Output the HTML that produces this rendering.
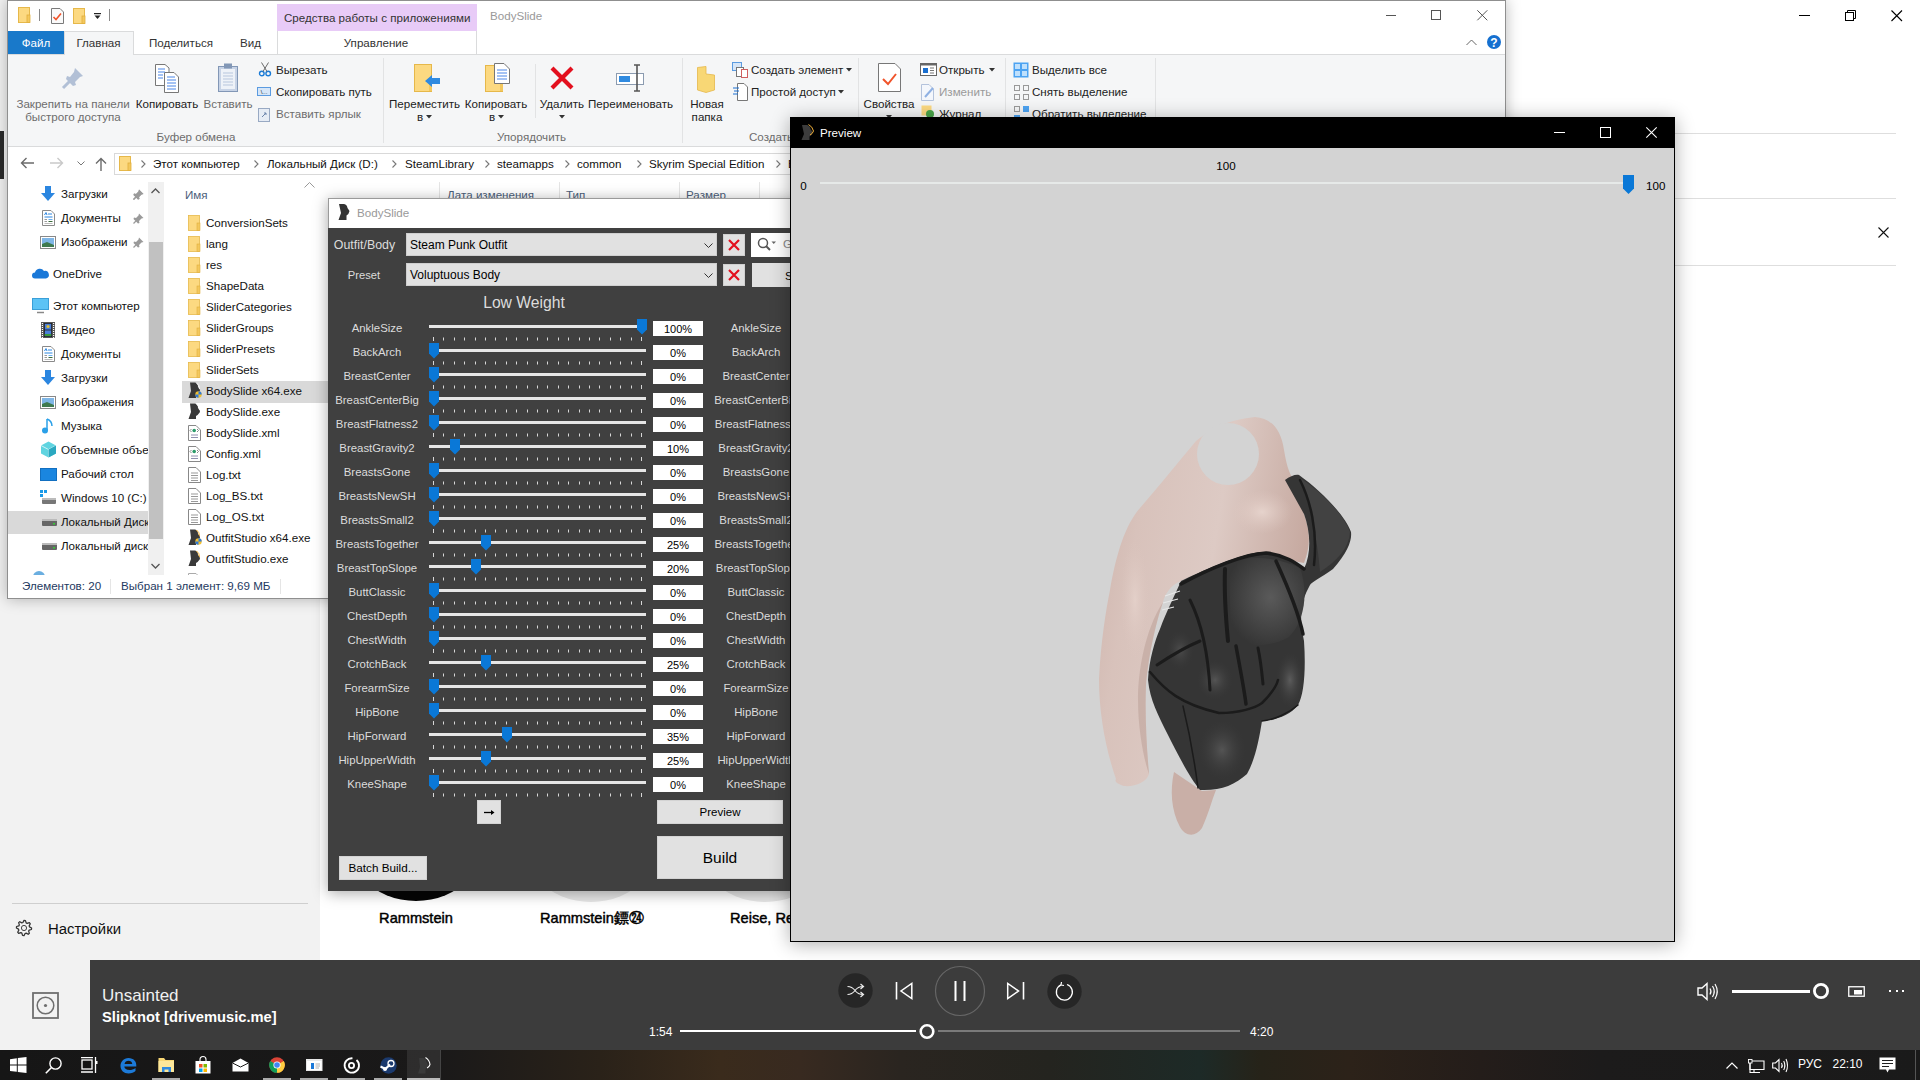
<!DOCTYPE html>
<html><head><meta charset="utf-8">
<style>
*{margin:0;padding:0;box-sizing:border-box}
html,body{width:1920px;height:1080px;overflow:hidden;background:#fff;font-family:"Liberation Sans",sans-serif;font-size:12px;color:#000;position:relative}
.a{position:absolute}
.t{position:absolute;white-space:nowrap;line-height:1}
svg{overflow:visible}
</style></head><body>
<div class="a" style="left:0px;top:0px;width:320px;height:960px;background:#f2f2f2;"></div>
<div class="a" style="left:0px;top:131px;width:4px;height:48px;background:#2b2b2b;"></div>
<div class="a" style="left:12px;top:903px;width:296px;height:1px;background:#cfcfcf;"></div>
<svg class="a" style="left:16px;top:920px;" width="16" height="16" viewBox="0 0 16 16"><path d="M8.00 0.40 L9.48 0.55 L10.14 2.83 L11.11 3.34 L13.37 2.63 L14.32 3.78 L13.17 5.86 L13.49 6.91 L15.60 8.00 L15.45 9.48 L13.17 10.14 L12.66 11.11 L13.37 13.37 L12.22 14.32 L10.14 13.17 L9.09 13.49 L8.00 15.60 L6.52 15.45 L5.86 13.17 L4.89 12.66 L2.63 13.37 L1.68 12.22 L2.83 10.14 L2.51 9.09 L0.40 8.00 L0.55 6.52 L2.83 5.86 L3.34 4.89 L2.63 2.63 L3.78 1.68 L5.86 2.83 L6.91 2.51Z" fill="none" stroke="#333" stroke-width="1.25" stroke-linejoin="round"/><circle cx="8" cy="8" r="2.6" fill="none" stroke="#444" stroke-width="1"/></svg>
<div class="t" style="left:48px;top:921.7px;font-size:14.9px;color:#111;font-weight:400;">Настройки</div>
<svg class="a" style="left:1799px;top:15px;" width="12" height="2" viewBox="0 0 12 2"><rect x="0" y="0" width="11" height="1" fill="#000"/></svg>
<svg class="a" style="left:1845px;top:10px;" width="12" height="12" viewBox="0 0 12 12"><rect x="0.5" y="2.5" width="8" height="8" fill="none" stroke="#000"/><path d="M2.5 2.5V0.5H10.5V8.5H8.5" fill="none" stroke="#000"/></svg>
<svg class="a" style="left:1891px;top:10px;" width="12" height="12" viewBox="0 0 12 12"><path d="M0.5 0.5L11 11M11 0.5L0.5 11" stroke="#000" stroke-width="1.1"/></svg>
<div class="a" style="left:1675px;top:133px;width:221px;height:1px;background:#dedede;"></div>
<div class="a" style="left:1675px;top:198px;width:221px;height:1px;background:#dedede;"></div>
<div class="a" style="left:1675px;top:265px;width:221px;height:1px;background:#dedede;"></div>
<svg class="a" style="left:1878px;top:227px;" width="11" height="11" viewBox="0 0 11 11"><path d="M0.5 0.5L10.5 10.5M10.5 0.5L0.5 10.5" stroke="#111" stroke-width="1.1"/></svg>
<div class="a" style="left:339px;top:747px;width:154px;height:154px;border-radius:50%;background:#050505"></div>
<div class="a" style="left:514px;top:748px;width:154px;height:154px;border-radius:50%;background:#e6e6e6"></div>
<div class="a" style="left:688px;top:748px;width:154px;height:154px;border-radius:50%;background:#e6e6e6"></div>
<div class="t" style="left:336.0px;width:160px;text-align:center;top:910.8px;font-size:14.6px;color:#000;font-weight:400;-webkit-text-stroke:0.45px #000">Rammstein</div>
<div class="t" style="left:540px;top:910.8px;font-size:14.6px;color:#000;font-weight:400;-webkit-text-stroke:0.45px #000">Rammstein鏢㉔</div>
<div class="t" style="left:730px;top:910.8px;font-size:14.6px;color:#000;font-weight:400;-webkit-text-stroke:0.45px #000">Reise, Re</div>
<div class="a" style="left:7px;top:0;width:1499px;height:599px;background:#fff;border:1px solid #8f8f8f;box-shadow:0 0 14px rgba(0,0,0,.28)"></div>
<svg class="a" style="left:18px;top:7px;" width="13" height="16" viewBox="0 0 13 16"><rect x="0.5" y="0.5" width="11" height="15" fill="#fcd981" stroke="#e6b84a"/><rect x="9" y="8" width="3" height="7.5" fill="#f3c85e" stroke="#e0ae3c" stroke-width="0.8"/></svg>
<div class="a" style="left:39px;top:9px;width:1px;height:12px;background:#8a8a8a;"></div>
<svg class="a" style="left:51px;top:8px;" width="13" height="16" viewBox="0 0 13 16"><path d="M0.5 0.5H9L12.5 4V15.5H0.5Z" fill="#fafafa" stroke="#7a7a7a"/><path d="M2.5 9L5 11.5L10 5.5" fill="none" stroke="#f0542b" stroke-width="1.6"/></svg>
<svg class="a" style="left:73px;top:8px;" width="13" height="16" viewBox="0 0 13 16"><rect x="0.5" y="0.5" width="11" height="15" fill="#fcd981" stroke="#e6b84a"/><rect x="9" y="8" width="3" height="7.5" fill="#f3c85e" stroke="#e0ae3c" stroke-width="0.8"/></svg>
<svg class="a" style="left:94px;top:13px;" width="8" height="7" viewBox="0 0 8 7"><rect x="0" y="0" width="7" height="1.2" fill="#222"/><path d="M0.5 2.5H6.5L3.5 6Z" fill="#222"/></svg>
<div class="a" style="left:109px;top:9px;width:1px;height:12px;background:#8a8a8a;"></div>
<div class="a" style="left:277px;top:4px;width:200px;height:27px;background:#e8cbf7;"></div>
<div class="t" style="left:284px;top:11.5px;font-size:11.6px;color:#333;font-weight:400;">Средства работы с приложениями</div>
<div class="t" style="left:490px;top:9.5px;font-size:11.6px;color:#999;font-weight:400;">BodySlide</div>
<div class="a" style="left:1386px;top:15px;width:10px;height:1px;background:#555;"></div>
<div class="a" style="left:1431px;top:10px;width:10px;height:10px;border:1px solid #555"></div>
<svg class="a" style="left:1477px;top:10px;" width="11" height="11" viewBox="0 0 11 11"><path d="M0.3 0.3L10.3 10.3M10.3 0.3L0.3 10.3" stroke="#555" stroke-width="1"/></svg>
<div class="a" style="left:8px;top:54px;width:1497px;height:1px;background:#dadbdc;"></div>
<div class="a" style="left:8px;top:31px;width:56px;height:23px;background:#1979ca;"></div>
<div class="t" style="left:8.0px;width:56px;text-align:center;top:36.5px;font-size:11.6px;color:#fff;font-weight:400;">Файл</div>
<div class="a" style="left:64px;top:31px;width:70px;height:24px;background:#f5f6f7;border:1px solid #dadbdc;border-bottom:none"></div>
<div class="t" style="left:63.5px;width:70px;text-align:center;top:36.5px;font-size:11.6px;color:#333;font-weight:400;">Главная</div>
<div class="t" style="left:149px;top:36.5px;font-size:11.6px;color:#333;font-weight:400;">Поделиться</div>
<div class="t" style="left:240px;top:36.5px;font-size:11.6px;color:#333;font-weight:400;">Вид</div>
<div class="a" style="left:277px;top:31px;width:1px;height:23px;background:#dadbdc;"></div>
<div class="a" style="left:476px;top:31px;width:1px;height:23px;background:#dadbdc;"></div>
<div class="t" style="left:277.0px;width:198px;text-align:center;top:36.5px;font-size:11.6px;color:#333;font-weight:400;">Управление</div>
<svg class="a" style="left:1466px;top:39px;" width="11" height="7" viewBox="0 0 11 7"><path d="M0.5 6L5.5 1L10.5 6" fill="none" stroke="#666" stroke-width="1"/></svg>
<svg class="a" style="left:1487px;top:35px;" width="14" height="14" viewBox="0 0 14 14"><circle cx="7" cy="7" r="7" fill="#1570d0"/><text x="7" y="11.5" font-size="12" font-weight="700" fill="#fff" text-anchor="middle" font-family="Liberation Sans">?</text></svg>
<div class="a" style="left:8px;top:55px;width:1497px;height:91px;background:#f5f6f7;"></div>
<div class="a" style="left:8px;top:146px;width:1497px;height:1px;background:#dadbdc;"></div>
<div class="a" style="left:383px;top:58px;width:1px;height:85px;background:#e2e3e4;"></div>
<div class="a" style="left:682px;top:58px;width:1px;height:85px;background:#e2e3e4;"></div>
<div class="a" style="left:858px;top:58px;width:1px;height:85px;background:#e2e3e4;"></div>
<div class="a" style="left:1005px;top:58px;width:1px;height:85px;background:#e2e3e4;"></div>
<div class="a" style="left:1155px;top:58px;width:1px;height:85px;background:#e2e3e4;"></div>
<div class="a" style="left:535px;top:64px;width:1px;height:54px;background:#e2e3e4;"></div>
<svg class="a" style="left:62px;top:67px;" width="22" height="22" viewBox="0 0 22 22"><path d="M13 1L21 9L18 10L13 15L14 18L11 19L4 12L5 9L8 10L12 5Z" fill="#b2c0d6"/><path d="M8 14L1 21" stroke="#b2c0d6" stroke-width="3"/></svg>
<div class="t" style="left:8.0px;width:130px;text-align:center;top:98.0px;font-size:11.6px;color:#6d6d6d;font-weight:400;">Закрепить на панели</div>
<div class="t" style="left:8.0px;width:130px;text-align:center;top:111.0px;font-size:11.6px;color:#6d6d6d;font-weight:400;">быстрого доступа</div>
<svg class="a" style="left:155px;top:64px;" width="25" height="29" viewBox="0 0 25 29"><path d="M0.5 0.5H10L14 4V21.5H0.5Z" fill="#fff" stroke="#777"/><path d="M9.5 8.5H19L23.5 13V28.5H9.5Z" fill="#fff" stroke="#777"/><g stroke="#4a86e8" stroke-width="1"><path d="M3 5H10M3 8H10M3 11H8M3 14H8M12 13H20M12 16H21M12 19H21M12 22H21M12 25H21"/></g></svg>
<div class="t" style="left:127.0px;width:80px;text-align:center;top:98.0px;font-size:11.6px;color:#222;font-weight:400;">Копировать</div>
<svg class="a" style="left:218px;top:63px;" width="21" height="30" viewBox="0 0 21 30"><rect x="0.5" y="3.5" width="19" height="25" fill="#c7d3e6" stroke="#8297b6"/><rect x="3" y="6" width="14" height="20" fill="#eef2f8"/><rect x="6" y="0.5" width="8" height="5" fill="#8297b6"/><g stroke="#b7c6dd"><path d="M5 10H15M5 13H15M5 16H15M5 19H15M5 22H15"/></g></svg>
<div class="t" style="left:198.0px;width:60px;text-align:center;top:98.0px;font-size:11.6px;color:#6d6d6d;font-weight:400;">Вставить</div>
<svg class="a" style="left:259px;top:62px;" width="12" height="15" viewBox="0 0 12 15"><circle cx="2.8" cy="11.5" r="2.3" fill="none" stroke="#1a7bd7" stroke-width="1.4"/><circle cx="9.2" cy="11.5" r="2.3" fill="none" stroke="#1a7bd7" stroke-width="1.4"/><path d="M4 9.5L9.5 0.5M8 9.5L2.5 0.5" stroke="#6a6a6a" stroke-width="1"/></svg>
<div class="t" style="left:276px;top:64.0px;font-size:11.6px;color:#222;font-weight:400;">Вырезать</div>
<svg class="a" style="left:257px;top:87px;" width="14" height="10" viewBox="0 0 14 10"><rect x="0.5" y="0.5" width="13" height="8" fill="#d6e6f8" stroke="#5b9be0"/><text x="7" y="7.3" font-size="6" fill="#123" text-anchor="middle" font-family="Liberation Sans">\...</text></svg>
<div class="t" style="left:276px;top:86.0px;font-size:11.6px;color:#222;font-weight:400;">Скопировать путь</div>
<svg class="a" style="left:258px;top:107px;" width="12" height="15" viewBox="0 0 12 15"><rect x="0.5" y="1.5" width="11" height="13" fill="#e6ecf5" stroke="#98a9c3"/><path d="M4 10L8 6M6 6H8V8" stroke="#6b84ab" fill="none"/></svg>
<div class="t" style="left:276px;top:108.0px;font-size:11.6px;color:#6d6d6d;font-weight:400;">Вставить ярлык</div>
<div class="t" style="left:146.0px;width:100px;text-align:center;top:131.0px;font-size:11.6px;color:#6d6d6d;font-weight:400;">Буфер обмена</div>
<svg class="a" style="left:414px;top:64px;" width="27" height="29" viewBox="0 0 27 29"><rect x="0.5" y="0.5" width="17" height="27" fill="#fcd981" stroke="#e6b84a"/><rect x="15" y="16" width="3" height="11" fill="#f3c85e"/><path d="M11 17L18 11V14H26V20H18V23Z" fill="#2f8ae0"/></svg>
<div class="t" style="left:384.5px;width:80px;text-align:center;top:98.0px;font-size:11.6px;color:#222;font-weight:400;">Переместить</div>
<div class="t" style="left:417px;top:111.0px;font-size:11.6px;color:#222;font-weight:400;">в</div>
<svg class="a" style="left:426px;top:115px;" width="6" height="4" viewBox="0 0 6 4"><path d="M0 0H6L3 3.5Z" fill="#333"/></svg>
<svg class="a" style="left:485px;top:63px;" width="26" height="30" viewBox="0 0 26 30"><rect x="0.5" y="2.5" width="17" height="26" fill="#fcd981" stroke="#e6b84a"/><rect x="15" y="17" width="3" height="11" fill="#f3c85e"/><path d="M9.5 0.5H19L24.5 6V20.5H9.5Z" fill="#fff" stroke="#777"/><g stroke="#4a86e8"><path d="M12 7H22M12 10H22M12 13H22M12 16H22"/></g></svg>
<div class="t" style="left:456.0px;width:80px;text-align:center;top:98.0px;font-size:11.6px;color:#222;font-weight:400;">Копировать</div>
<div class="t" style="left:489px;top:111.0px;font-size:11.6px;color:#222;font-weight:400;">в</div>
<svg class="a" style="left:498px;top:115px;" width="6" height="4" viewBox="0 0 6 4"><path d="M0 0H6L3 3.5Z" fill="#333"/></svg>
<svg class="a" style="left:549px;top:65px;" width="26" height="26" viewBox="0 0 26 26"><path d="M3 3L23 23M23 3L3 23" stroke="#e3101e" stroke-width="4.2"/></svg>
<div class="t" style="left:532.0px;width:60px;text-align:center;top:98.0px;font-size:11.6px;color:#222;font-weight:400;">Удалить</div>
<svg class="a" style="left:559px;top:115px;" width="6" height="4" viewBox="0 0 6 4"><path d="M0 0H6L3 3.5Z" fill="#333"/></svg>
<svg class="a" style="left:616px;top:64px;" width="30" height="28" viewBox="0 0 30 28"><rect x="0.5" y="9.5" width="27" height="11" fill="#fff" stroke="#8b9bb0"/><rect x="3" y="12" width="11" height="6" fill="#2f8ae0"/><path d="M18 1H24M21 1V27M18 27H24" stroke="#555" stroke-width="1.6"/></svg>
<div class="t" style="left:580.5px;width:100px;text-align:center;top:98.0px;font-size:11.6px;color:#222;font-weight:400;">Переименовать</div>
<svg class="a" style="left:697px;top:66px;" width="19" height="27" viewBox="0 0 19 27"><path d="M0.5 1.5L9 0.5V8L17.5 9V24L9 26.5L0.5 24Z" fill="#f8d775" stroke="#e6b84a" stroke-width="0.8"/></svg>
<div class="t" style="left:677.0px;width:60px;text-align:center;top:98.0px;font-size:11.6px;color:#222;font-weight:400;">Новая</div>
<div class="t" style="left:677.0px;width:60px;text-align:center;top:111.0px;font-size:11.6px;color:#222;font-weight:400;">папка</div>
<svg class="a" style="left:732px;top:62px;" width="17" height="16" viewBox="0 0 17 16"><rect x="0.5" y="0.5" width="9" height="8" fill="#d6e6f8" stroke="#5b9be0"/><rect x="4.5" y="5.5" width="7" height="9" fill="#fff" stroke="#777"/><rect x="9.5" y="7.5" width="6" height="8" fill="#fff" stroke="#d06060"/></svg>
<div class="t" style="left:751px;top:64.0px;font-size:11.6px;color:#222;font-weight:400;">Создать элемент</div>
<svg class="a" style="left:846px;top:68px;" width="6" height="4" viewBox="0 0 6 4"><path d="M0 0H6L3 3.5Z" fill="#333"/></svg>
<svg class="a" style="left:733px;top:83px;" width="15" height="18" viewBox="0 0 15 18"><path d="M4.5 0.5H11L14.5 4V17.5H4.5Z" fill="#fff" stroke="#777"/><path d="M0 5H6M1 8H6M0 11H5" stroke="#1a6fd0"/></svg>
<div class="t" style="left:751px;top:86.0px;font-size:11.6px;color:#222;font-weight:400;">Простой доступ</div>
<svg class="a" style="left:838px;top:90px;" width="6" height="4" viewBox="0 0 6 4"><path d="M0 0H6L3 3.5Z" fill="#333"/></svg>
<div class="t" style="left:481.5px;width:100px;text-align:center;top:131.0px;font-size:11.6px;color:#6d6d6d;font-weight:400;">Упорядочить</div>
<div class="t" style="left:749px;top:131.0px;font-size:11.6px;color:#6d6d6d;font-weight:400;">Создать</div>
<svg class="a" style="left:878px;top:63px;" width="23" height="30" viewBox="0 0 23 30"><path d="M0.5 0.5H17L22.5 6V28.5H0.5Z" fill="#fff" stroke="#777"/><path d="M5 16L10 21L18 11" fill="none" stroke="#f0542b" stroke-width="2"/></svg>
<div class="t" style="left:859.0px;width:60px;text-align:center;top:98.0px;font-size:11.6px;color:#222;font-weight:400;">Свойства</div>
<svg class="a" style="left:886px;top:115px;" width="6" height="4" viewBox="0 0 6 4"><path d="M0 0H6L3 3.5Z" fill="#333"/></svg>
<svg class="a" style="left:920px;top:63px;" width="17" height="13" viewBox="0 0 17 13"><rect x="0.5" y="0.5" width="16" height="12" fill="#fff" stroke="#666"/><rect x="0.5" y="0.5" width="16" height="2" fill="#666"/><rect x="3" y="5" width="5" height="5" fill="#1a6fd0"/><path d="M10 5H14M10 7.5H14M10 10H14" stroke="#777"/></svg>
<div class="t" style="left:939px;top:64.0px;font-size:11.6px;color:#222;font-weight:400;">Открыть</div>
<svg class="a" style="left:989px;top:68px;" width="6" height="4" viewBox="0 0 6 4"><path d="M0 0H6L3 3.5Z" fill="#333"/></svg>
<svg class="a" style="left:921px;top:84px;" width="15" height="17" viewBox="0 0 15 17"><path d="M0.5 0.5H8L12.5 5V16.5H0.5Z" fill="#f4f7fc" stroke="#b4c3dc"/><path d="M4 13L12 4" stroke="#8fb1e3" stroke-width="2"/></svg>
<div class="t" style="left:939px;top:86.0px;font-size:11.6px;color:#9a9a9a;font-weight:400;">Изменить</div>
<svg class="a" style="left:921px;top:105px;" width="15" height="12" viewBox="0 0 15 12"><rect x="0.5" y="0.5" width="10" height="10" fill="#fcd981"/><circle cx="9" cy="9" r="4" fill="#4aa54a"/></svg>
<div class="t" style="left:939px;top:108.0px;font-size:11.6px;color:#222;font-weight:400;">Журнал</div>
<svg class="a" style="left:1013px;top:62px;" width="16" height="16" viewBox="0 0 16 16"><rect x="0.5" y="0.5" width="15" height="15" fill="#4da3f2"/><rect x="2" y="2" width="5" height="5" fill="#bfe0fc"/><rect x="9" y="2" width="5" height="5" fill="#bfe0fc"/><rect x="2" y="9" width="5" height="5" fill="#bfe0fc"/><rect x="9" y="9" width="5" height="5" fill="#bfe0fc"/></svg>
<div class="t" style="left:1032px;top:64.0px;font-size:11.6px;color:#222;font-weight:400;">Выделить все</div>
<svg class="a" style="left:1014px;top:85px;" width="15" height="15" viewBox="0 0 15 15"><g fill="none" stroke="#999"><rect x="0.5" y="0.5" width="5" height="5"/><rect x="9.5" y="0.5" width="5" height="5"/><rect x="0.5" y="9.5" width="5" height="5"/><rect x="9.5" y="9.5" width="5" height="5"/></g></svg>
<div class="t" style="left:1032px;top:86.0px;font-size:11.6px;color:#222;font-weight:400;">Снять выделение</div>
<svg class="a" style="left:1014px;top:106px;" width="15" height="12" viewBox="0 0 15 12"><g fill="none" stroke="#999"><rect x="0.5" y="0.5" width="5" height="5"/></g><rect x="9" y="0" width="6" height="6" fill="#4da3f2"/><rect x="0" y="9" width="6" height="6" fill="#4da3f2"/></svg>
<div class="t" style="left:1032px;top:108.0px;font-size:11.6px;color:#222;font-weight:400;">Обратить выделение</div>
<svg class="a" style="left:20px;top:157px;" width="15" height="12" viewBox="0 0 15 12"><path d="M14 6H1.5M6.5 1L1.5 6L6.5 11" fill="none" stroke="#6b6b6b" stroke-width="1.4"/></svg>
<svg class="a" style="left:49px;top:157px;" width="15" height="12" viewBox="0 0 15 12"><path d="M1 6H13.5M8.5 1L13.5 6L8.5 11" fill="none" stroke="#c9c9c9" stroke-width="1.4"/></svg>
<svg class="a" style="left:77px;top:161px;" width="8" height="5" viewBox="0 0 8 5"><path d="M0.5 0.5L4 4L7.5 0.5" fill="none" stroke="#777" stroke-width="1"/></svg>
<svg class="a" style="left:95px;top:157px;" width="12" height="14" viewBox="0 0 12 14"><path d="M6 14V1.5M1 6.5L6 1.5L11 6.5" fill="none" stroke="#6b6b6b" stroke-width="1.4"/></svg>
<div class="a" style="left:114px;top:153px;width:700px;height:22px;background:#fff;border:1px solid #d9d9d9"></div>
<svg class="a" style="left:119px;top:156px;" width="13" height="15" viewBox="0 0 13 15"><rect x="0.5" y="0.5" width="11" height="14" fill="#fcd981" stroke="#e6b84a"/><rect x="9" y="7" width="3" height="7.5" fill="#f3c85e" stroke="#e0ae3c" stroke-width="0.8"/></svg>
<svg class="a" style="left:141px;top:160px;" width="5" height="8" viewBox="0 0 5 8"><path d="M0.5 0.5L4 4L0.5 7.5" fill="none" stroke="#777" stroke-width="1.1"/></svg>
<div class="t" style="left:153px;top:158.0px;font-size:11.6px;color:#111;font-weight:400;">Этот компьютер</div>
<svg class="a" style="left:254px;top:160px;" width="5" height="8" viewBox="0 0 5 8"><path d="M0.5 0.5L4 4L0.5 7.5" fill="none" stroke="#777" stroke-width="1.1"/></svg>
<div class="t" style="left:267px;top:158.0px;font-size:11.6px;color:#111;font-weight:400;">Локальный Диск (D:)</div>
<svg class="a" style="left:392px;top:160px;" width="5" height="8" viewBox="0 0 5 8"><path d="M0.5 0.5L4 4L0.5 7.5" fill="none" stroke="#777" stroke-width="1.1"/></svg>
<div class="t" style="left:405px;top:158.0px;font-size:11.6px;color:#111;font-weight:400;">SteamLibrary</div>
<svg class="a" style="left:485px;top:160px;" width="5" height="8" viewBox="0 0 5 8"><path d="M0.5 0.5L4 4L0.5 7.5" fill="none" stroke="#777" stroke-width="1.1"/></svg>
<div class="t" style="left:497px;top:158.0px;font-size:11.6px;color:#111;font-weight:400;">steamapps</div>
<svg class="a" style="left:565px;top:160px;" width="5" height="8" viewBox="0 0 5 8"><path d="M0.5 0.5L4 4L0.5 7.5" fill="none" stroke="#777" stroke-width="1.1"/></svg>
<div class="t" style="left:577px;top:158.0px;font-size:11.6px;color:#111;font-weight:400;">common</div>
<svg class="a" style="left:637px;top:160px;" width="5" height="8" viewBox="0 0 5 8"><path d="M0.5 0.5L4 4L0.5 7.5" fill="none" stroke="#777" stroke-width="1.1"/></svg>
<div class="t" style="left:649px;top:158.0px;font-size:11.6px;color:#111;font-weight:400;">Skyrim Special Edition</div>
<svg class="a" style="left:776px;top:160px;" width="5" height="8" viewBox="0 0 5 8"><path d="M0.5 0.5L4 4L0.5 7.5" fill="none" stroke="#777" stroke-width="1.1"/></svg>
<div class="t" style="left:788px;top:158.0px;font-size:11.6px;color:#111;font-weight:400;">B</div>
<div class="t" style="left:185px;top:188.5px;font-size:11.6px;color:#4c607a;font-weight:400;">Имя</div>
<svg class="a" style="left:304px;top:182px;" width="11" height="6" viewBox="0 0 11 6"><path d="M0.5 5.5L5.5 0.5L10.5 5.5" fill="none" stroke="#999" stroke-width="1"/></svg>
<div class="a" style="left:439px;top:182px;width:1px;height:24px;background:#e5e5e5;"></div>
<div class="a" style="left:559px;top:182px;width:1px;height:24px;background:#e5e5e5;"></div>
<div class="a" style="left:679px;top:182px;width:1px;height:24px;background:#e5e5e5;"></div>
<div class="a" style="left:759px;top:182px;width:1px;height:24px;background:#e5e5e5;"></div>
<div class="t" style="left:447px;top:188.5px;font-size:11.6px;color:#4c607a;font-weight:400;">Дата изменения</div>
<div class="t" style="left:566px;top:188.5px;font-size:11.6px;color:#4c607a;font-weight:400;">Тип</div>
<div class="t" style="left:686px;top:188.5px;font-size:11.6px;color:#4c607a;font-weight:400;">Размер</div>
<div class="a" style="left:163px;top:205px;width:630px;height:1px;background:#ffffff;"></div>
<div class="a" style="left:148px;top:182px;width:16px;height:393px;background:#f0f0f0;"></div>
<div class="a" style="left:149px;top:242px;width:14px;height:297px;background:#c1c1c1;"></div>
<svg class="a" style="left:151px;top:188px;" width="9" height="6" viewBox="0 0 9 6"><path d="M0.5 5L4.5 1L8.5 5" fill="none" stroke="#555" stroke-width="1.3"/></svg>
<svg class="a" style="left:151px;top:563px;" width="9" height="6" viewBox="0 0 9 6"><path d="M0.5 1L4.5 5L8.5 1" fill="none" stroke="#555" stroke-width="1.3"/></svg>
<div class="a" style="left:8px;top:511px;width:140px;height:23px;background:#d9d9d9;"></div>
<div class="a" style="left:8px;top:182px;width:140px;height:393px;overflow:hidden">
<svg class="a" style="left:32px;top:4px;" width="16" height="16" viewBox="0 0 16 16"><path d="M5 0H11V7H15L8 15L1 7H5Z" fill="#2b86e0"/></svg>
<div class="t" style="left:53px;top:6.0px;font-size:11.6px;color:#111;font-weight:400;">Загрузки</div>
<svg class="a" style="left:34px;top:28px;" width="14" height="16" viewBox="0 0 14 16"><path d="M0.5 0.5H9L12.5 4V15.5H0.5Z" fill="#fff" stroke="#8a8a8a"/><path d="M2.5 5L4 2.5L5 5" fill="none" stroke="#2a86e0" stroke-width="1"/><path d="M6 4H10M2.5 7H10.5" stroke="#2a86e0" stroke-width="1"/><path d="M2.5 9.5H5M2.5 11.5H5" stroke="#999"/><path d="M6.5 9.5H10.5" stroke="#6aaef0"/><path d="M6.5 11.5H10.5" stroke="#3a6a3a"/><path d="M2.5 13.5H10.5" stroke="#bbb"/></svg>
<div class="t" style="left:53px;top:30.0px;font-size:11.6px;color:#111;font-weight:400;">Документы</div>
<svg class="a" style="left:32px;top:54px;" width="16" height="13" viewBox="0 0 16 13"><rect x="0.5" y="0.5" width="15" height="12" fill="#fff" stroke="#888"/><rect x="2" y="2" width="12" height="9" fill="#7fb6e6"/><path d="M2 8L7 6L14 9V11H2Z" fill="#3f7a4f"/></svg>
<div class="t" style="left:53px;top:54.0px;font-size:11.6px;color:#111;font-weight:400;">Изображени</div>
<svg class="a" style="left:24px;top:86px;" width="17" height="11" viewBox="0 0 17 11"><path d="M3 10.5A3 3 0 0 1 3 4.5A5 5 0 0 1 12 3A3.8 3.8 0 0 1 14 10.5Z" fill="#1a78d8"/></svg>
<div class="t" style="left:45px;top:86.0px;font-size:11.6px;color:#111;font-weight:400;">OneDrive</div>
<svg class="a" style="left:24px;top:116px;" width="17" height="16" viewBox="0 0 17 16"><rect x="0.5" y="0.5" width="16" height="11" fill="#5cc3f5" stroke="#3a9fd8"/><path d="M5 14.5H12" stroke="#888" stroke-width="1.5"/></svg>
<div class="t" style="left:45px;top:118.0px;font-size:11.6px;color:#111;font-weight:400;">Этот компьютер</div>
<svg class="a" style="left:33px;top:140px;" width="14" height="16" viewBox="0 0 14 16"><rect x="0" y="0" width="14" height="16" fill="#555"/><rect x="3" y="1" width="8" height="14" fill="#1e1e1e"/><rect x="3.8" y="1.8" width="6.4" height="5.8" fill="#4a7fd8"/><rect x="3.8" y="8.4" width="6.4" height="5.8" fill="#4a7fd8"/><circle cx="7" cy="4.5" r="1.6" fill="#e0c030"/><rect x="3.8" y="12" width="6.4" height="2" fill="#3a9a3a"/><rect x="0.8" y="1" width="1.2" height="1" fill="#fff"/><rect x="12" y="1" width="1.2" height="1" fill="#fff"/><rect x="0.8" y="3" width="1.2" height="1" fill="#fff"/><rect x="12" y="3" width="1.2" height="1" fill="#fff"/><rect x="0.8" y="5" width="1.2" height="1" fill="#fff"/><rect x="12" y="5" width="1.2" height="1" fill="#fff"/><rect x="0.8" y="7" width="1.2" height="1" fill="#fff"/><rect x="12" y="7" width="1.2" height="1" fill="#fff"/><rect x="0.8" y="9" width="1.2" height="1" fill="#fff"/><rect x="12" y="9" width="1.2" height="1" fill="#fff"/><rect x="0.8" y="11" width="1.2" height="1" fill="#fff"/><rect x="12" y="11" width="1.2" height="1" fill="#fff"/><rect x="0.8" y="13" width="1.2" height="1" fill="#fff"/><rect x="12" y="13" width="1.2" height="1" fill="#fff"/><rect x="0.8" y="15" width="1.2" height="1" fill="#fff"/><rect x="12" y="15" width="1.2" height="1" fill="#fff"/></svg>
<div class="t" style="left:53px;top:142.0px;font-size:11.6px;color:#111;font-weight:400;">Видео</div>
<svg class="a" style="left:34px;top:164px;" width="14" height="16" viewBox="0 0 14 16"><path d="M0.5 0.5H9L12.5 4V15.5H0.5Z" fill="#fff" stroke="#8a8a8a"/><path d="M2.5 5L4 2.5L5 5" fill="none" stroke="#2a86e0" stroke-width="1"/><path d="M6 4H10M2.5 7H10.5" stroke="#2a86e0" stroke-width="1"/><path d="M2.5 9.5H5M2.5 11.5H5" stroke="#999"/><path d="M6.5 9.5H10.5" stroke="#6aaef0"/><path d="M6.5 11.5H10.5" stroke="#3a6a3a"/><path d="M2.5 13.5H10.5" stroke="#bbb"/></svg>
<div class="t" style="left:53px;top:166.0px;font-size:11.6px;color:#111;font-weight:400;">Документы</div>
<svg class="a" style="left:32px;top:188px;" width="16" height="16" viewBox="0 0 16 16"><path d="M5 0H11V7H15L8 15L1 7H5Z" fill="#2b86e0"/></svg>
<div class="t" style="left:53px;top:190.0px;font-size:11.6px;color:#111;font-weight:400;">Загрузки</div>
<svg class="a" style="left:32px;top:214px;" width="16" height="13" viewBox="0 0 16 13"><rect x="0.5" y="0.5" width="15" height="12" fill="#fff" stroke="#888"/><rect x="2" y="2" width="12" height="9" fill="#7fb6e6"/><path d="M2 8L7 6L14 9V11H2Z" fill="#3f7a4f"/></svg>
<div class="t" style="left:53px;top:214.0px;font-size:11.6px;color:#111;font-weight:400;">Изображения</div>
<svg class="a" style="left:33px;top:236px;" width="14" height="16" viewBox="0 0 14 16"><path d="M6 1V12" stroke="#2aa0e8" stroke-width="1.5"/><circle cx="4" cy="12.5" r="3" fill="#2aa0e8"/><path d="M6 1Q11 3 11 8" fill="none" stroke="#2aa0e8" stroke-width="1.5"/></svg>
<div class="t" style="left:53px;top:238.0px;font-size:11.6px;color:#111;font-weight:400;">Музыка</div>
<svg class="a" style="left:32px;top:259px;" width="17" height="17" viewBox="0 0 17 17"><path d="M8.5 0.5L16 4.5V12.5L8.5 16.5L1 12.5V4.5Z" fill="#5fd4e0"/><path d="M8.5 8.5L16 4.5M8.5 8.5L1 4.5M8.5 8.5V16.5" stroke="#fff" stroke-width="0.7"/><path d="M8.5 8.5L16 4.5V12.5L8.5 16.5Z" fill="#2aa8c0"/></svg>
<div class="t" style="left:53px;top:262.0px;font-size:11.6px;color:#111;font-weight:400;">Объемные объекты</div>
<svg class="a" style="left:32px;top:286px;" width="17" height="13" viewBox="0 0 17 13"><rect x="0.5" y="0.5" width="16" height="12" fill="#1a86e0" stroke="#126fc0"/></svg>
<div class="t" style="left:53px;top:286.0px;font-size:11.6px;color:#111;font-weight:400;">Рабочий стол</div>
<svg class="a" style="left:32px;top:308px;" width="17" height="15" viewBox="0 0 17 15"><rect x="0" y="0" width="3" height="3" fill="#1a9ae8"/><rect x="4" y="0" width="3" height="3" fill="#1a9ae8"/><rect x="0" y="4" width="3" height="3" fill="#1a9ae8"/><rect x="2" y="9" width="14" height="5" rx="1" fill="#777"/><rect x="2" y="8" width="14" height="2" fill="#bbb"/></svg>
<div class="t" style="left:53px;top:310.0px;font-size:11.6px;color:#111;font-weight:400;">Windows 10 (C:)</div>
<svg class="a" style="left:33px;top:336px;" width="17" height="8" viewBox="0 0 17 8"><rect x="1" y="2" width="15" height="6" rx="1" fill="#666"/><rect x="1" y="1" width="15" height="2" fill="#bbb"/><rect x="12" y="5" width="2" height="1.5" fill="#3c3"/></svg>
<div class="t" style="left:53px;top:334.0px;font-size:11.6px;color:#111;font-weight:400;">Локальный Диск</div>
<svg class="a" style="left:33px;top:360px;" width="17" height="8" viewBox="0 0 17 8"><rect x="1" y="2" width="15" height="6" rx="1" fill="#666"/><rect x="1" y="1" width="15" height="2" fill="#bbb"/><rect x="12" y="5" width="2" height="1.5" fill="#3c3"/></svg>
<div class="t" style="left:53px;top:358.0px;font-size:11.6px;color:#111;font-weight:400;">Локальный диск</div>
<svg class="a" style="left:125px;top:7px;" width="11" height="11" viewBox="0 0 11 11"><path d="M6 0.5L10.5 5L8.5 5.5L6 8L6.5 10L5 10.5L0.5 6L1 4.5L3 5L5.5 2.5Z" fill="#9a9a9a"/><path d="M3 8L0.5 10.5" stroke="#9a9a9a" stroke-width="1.3"/></svg>
<svg class="a" style="left:125px;top:31px;" width="11" height="11" viewBox="0 0 11 11"><path d="M6 0.5L10.5 5L8.5 5.5L6 8L6.5 10L5 10.5L0.5 6L1 4.5L3 5L5.5 2.5Z" fill="#9a9a9a"/><path d="M3 8L0.5 10.5" stroke="#9a9a9a" stroke-width="1.3"/></svg>
<svg class="a" style="left:125px;top:55px;" width="11" height="11" viewBox="0 0 11 11"><path d="M6 0.5L10.5 5L8.5 5.5L6 8L6.5 10L5 10.5L0.5 6L1 4.5L3 5L5.5 2.5Z" fill="#9a9a9a"/><path d="M3 8L0.5 10.5" stroke="#9a9a9a" stroke-width="1.3"/></svg>
<svg class="a" style="left:24px;top:388px;" width="14" height="8" viewBox="0 0 14 8"><circle cx="7" cy="7" r="6" fill="#6aaee0"/></svg>
</div>
<svg class="a" style="left:133px;top:189px;" width="11" height="11" viewBox="0 0 11 11"><path d="M6 0.5L10.5 5L8.5 5.5L6 8L6.5 10L5 10.5L0.5 6L1 4.5L3 5L5.5 2.5Z" fill="#9a9a9a"/><path d="M3 8L0.5 10.5" stroke="#9a9a9a" stroke-width="1.3"/></svg>
<div class="a" style="left:182px;top:381px;width:146px;height:22px;background:#d9d9d9;"></div>
<div class="a" style="left:163px;top:206px;width:165px;height:369px;overflow:hidden">
<svg class="a" style="left:25px;top:9px;" width="13" height="16" viewBox="0 0 13 16"><rect x="0.5" y="0.5" width="11" height="15" fill="#fcd981" stroke="#e6b84a" stroke-width="0.8"/><rect x="9" y="8" width="3" height="7.5" fill="#f3c85e" stroke="#e0ae3c" stroke-width="0.6"/></svg>
<div class="t" style="left:43px;top:11.0px;font-size:11.6px;color:#111;font-weight:400;">ConversionSets</div>
<svg class="a" style="left:25px;top:30px;" width="13" height="16" viewBox="0 0 13 16"><rect x="0.5" y="0.5" width="11" height="15" fill="#fcd981" stroke="#e6b84a" stroke-width="0.8"/><rect x="9" y="8" width="3" height="7.5" fill="#f3c85e" stroke="#e0ae3c" stroke-width="0.6"/></svg>
<div class="t" style="left:43px;top:32.0px;font-size:11.6px;color:#111;font-weight:400;">lang</div>
<svg class="a" style="left:25px;top:51px;" width="13" height="16" viewBox="0 0 13 16"><rect x="0.5" y="0.5" width="11" height="15" fill="#fcd981" stroke="#e6b84a" stroke-width="0.8"/><rect x="9" y="8" width="3" height="7.5" fill="#f3c85e" stroke="#e0ae3c" stroke-width="0.6"/></svg>
<div class="t" style="left:43px;top:53.0px;font-size:11.6px;color:#111;font-weight:400;">res</div>
<svg class="a" style="left:25px;top:72px;" width="13" height="16" viewBox="0 0 13 16"><rect x="0.5" y="0.5" width="11" height="15" fill="#fcd981" stroke="#e6b84a" stroke-width="0.8"/><rect x="9" y="8" width="3" height="7.5" fill="#f3c85e" stroke="#e0ae3c" stroke-width="0.6"/></svg>
<div class="t" style="left:43px;top:74.0px;font-size:11.6px;color:#111;font-weight:400;">ShapeData</div>
<svg class="a" style="left:25px;top:93px;" width="13" height="16" viewBox="0 0 13 16"><rect x="0.5" y="0.5" width="11" height="15" fill="#fcd981" stroke="#e6b84a" stroke-width="0.8"/><rect x="9" y="8" width="3" height="7.5" fill="#f3c85e" stroke="#e0ae3c" stroke-width="0.6"/></svg>
<div class="t" style="left:43px;top:95.0px;font-size:11.6px;color:#111;font-weight:400;">SliderCategories</div>
<svg class="a" style="left:25px;top:114px;" width="13" height="16" viewBox="0 0 13 16"><rect x="0.5" y="0.5" width="11" height="15" fill="#fcd981" stroke="#e6b84a" stroke-width="0.8"/><rect x="9" y="8" width="3" height="7.5" fill="#f3c85e" stroke="#e0ae3c" stroke-width="0.6"/></svg>
<div class="t" style="left:43px;top:116.0px;font-size:11.6px;color:#111;font-weight:400;">SliderGroups</div>
<svg class="a" style="left:25px;top:135px;" width="13" height="16" viewBox="0 0 13 16"><rect x="0.5" y="0.5" width="11" height="15" fill="#fcd981" stroke="#e6b84a" stroke-width="0.8"/><rect x="9" y="8" width="3" height="7.5" fill="#f3c85e" stroke="#e0ae3c" stroke-width="0.6"/></svg>
<div class="t" style="left:43px;top:137.0px;font-size:11.6px;color:#111;font-weight:400;">SliderPresets</div>
<svg class="a" style="left:25px;top:156px;" width="13" height="16" viewBox="0 0 13 16"><rect x="0.5" y="0.5" width="11" height="15" fill="#fcd981" stroke="#e6b84a" stroke-width="0.8"/><rect x="9" y="8" width="3" height="7.5" fill="#f3c85e" stroke="#e0ae3c" stroke-width="0.6"/></svg>
<div class="t" style="left:43px;top:158.0px;font-size:11.6px;color:#111;font-weight:400;">SliderSets</div>
<svg class="a" style="left:25px;top:176px;" width="14" height="17" viewBox="0 0 14 17"><path d="M2 0.5H7Q10 1 10 5Q12 6 12 9Q10 12 8 13L8 16H0.5L3 9Z" fill="#3a3a3a"/><path d="M8.5 1Q11.5 3 11.5 7" fill="none" stroke="#ffffff" stroke-width="1"/><circle cx="10.5" cy="12.5" r="3.2" fill="#f3c030"/><path d="M10.5 9.3A3.2 3.2 0 0 1 13.7 12.5H10.5ZM10.5 15.7A3.2 3.2 0 0 1 7.3 12.5H10.5Z" fill="#2f7ad8"/></svg>
<div class="t" style="left:43px;top:179.0px;font-size:11.6px;color:#111;font-weight:400;">BodySlide x64.exe</div>
<svg class="a" style="left:25px;top:197px;" width="14" height="17" viewBox="0 0 14 17"><path d="M2 0.5H7Q10 1 10 5Q12 6 12 9Q10 12 8 13L8 16H0.5L3 9Z" fill="#3a3a3a"/><path d="M8.5 1Q11.5 3 11.5 7" fill="none" stroke="#ffffff" stroke-width="1"/></svg>
<div class="t" style="left:43px;top:200.0px;font-size:11.6px;color:#111;font-weight:400;">BodySlide.exe</div>
<svg class="a" style="left:25px;top:219px;" width="13" height="16" viewBox="0 0 13 16"><path d="M0.5 0.5H8L12.5 5V15.5H0.5Z" fill="#fff" stroke="#888"/><path d="M3.5 4L2 5.5L3.5 7M9 4L10.5 5.5L9 7" fill="none" stroke="#666" stroke-width="0.8"/><circle cx="6.2" cy="5.5" r="1.8" fill="#2a9a6a"/><path d="M3 10H10M3 12.5H10" stroke="#9090b0"/></svg>
<div class="t" style="left:43px;top:221.0px;font-size:11.6px;color:#111;font-weight:400;">BodySlide.xml</div>
<svg class="a" style="left:25px;top:240px;" width="13" height="16" viewBox="0 0 13 16"><path d="M0.5 0.5H8L12.5 5V15.5H0.5Z" fill="#fff" stroke="#888"/><path d="M3.5 4L2 5.5L3.5 7M9 4L10.5 5.5L9 7" fill="none" stroke="#666" stroke-width="0.8"/><circle cx="6.2" cy="5.5" r="1.8" fill="#2a9a6a"/><path d="M3 10H10M3 12.5H10" stroke="#9090b0"/></svg>
<div class="t" style="left:43px;top:242.0px;font-size:11.6px;color:#111;font-weight:400;">Config.xml</div>
<svg class="a" style="left:25px;top:261px;" width="13" height="16" viewBox="0 0 13 16"><path d="M0.5 0.5H8L12.5 5V15.5H0.5Z" fill="#fff" stroke="#888"/><path d="M3 6H10M3 8.5H10M3 11H10M3 13.5H10" stroke="#999"/></svg>
<div class="t" style="left:43px;top:263.0px;font-size:11.6px;color:#111;font-weight:400;">Log.txt</div>
<svg class="a" style="left:25px;top:282px;" width="13" height="16" viewBox="0 0 13 16"><path d="M0.5 0.5H8L12.5 5V15.5H0.5Z" fill="#fff" stroke="#888"/><path d="M3 6H10M3 8.5H10M3 11H10M3 13.5H10" stroke="#999"/></svg>
<div class="t" style="left:43px;top:284.0px;font-size:11.6px;color:#111;font-weight:400;">Log_BS.txt</div>
<svg class="a" style="left:25px;top:303px;" width="13" height="16" viewBox="0 0 13 16"><path d="M0.5 0.5H8L12.5 5V15.5H0.5Z" fill="#fff" stroke="#888"/><path d="M3 6H10M3 8.5H10M3 11H10M3 13.5H10" stroke="#999"/></svg>
<div class="t" style="left:43px;top:305.0px;font-size:11.6px;color:#111;font-weight:400;">Log_OS.txt</div>
<svg class="a" style="left:25px;top:323px;" width="14" height="17" viewBox="0 0 14 17"><path d="M2 0.5H7Q10 1 10 5Q12 6 12 9Q10 12 8 13L8 16H0.5L3 9Z" fill="#3a3a3a"/><path d="M8.5 1Q11.5 3 11.5 7" fill="none" stroke="#f3b23a" stroke-width="1"/><circle cx="10.5" cy="12.5" r="3.2" fill="#f3c030"/><path d="M10.5 9.3A3.2 3.2 0 0 1 13.7 12.5H10.5ZM10.5 15.7A3.2 3.2 0 0 1 7.3 12.5H10.5Z" fill="#2f7ad8"/></svg>
<div class="t" style="left:43px;top:326.0px;font-size:11.6px;color:#111;font-weight:400;">OutfitStudio x64.exe</div>
<svg class="a" style="left:25px;top:344px;" width="14" height="17" viewBox="0 0 14 17"><path d="M2 0.5H7Q10 1 10 5Q12 6 12 9Q10 12 8 13L8 16H0.5L3 9Z" fill="#3a3a3a"/><path d="M8.5 1Q11.5 3 11.5 7" fill="none" stroke="#f3b23a" stroke-width="1"/></svg>
<div class="t" style="left:43px;top:347.0px;font-size:11.6px;color:#111;font-weight:400;">OutfitStudio.exe</div>
<svg class="a" style="left:25px;top:367px;" width="13" height="16" viewBox="0 0 13 16"><path d="M0.5 0.5H8L12.5 5V15.5H0.5Z" fill="#fff" stroke="#aaa"/></svg>
</div>
<div class="t" style="left:22px;top:580.0px;font-size:11.6px;color:#1e3a5f;font-weight:400;">Элементов: 20</div>
<div class="a" style="left:110px;top:579px;width:1px;height:15px;background:#e5e5e5;"></div>
<div class="t" style="left:121px;top:580.0px;font-size:11.6px;color:#1e3a5f;font-weight:400;">Выбран 1 элемент: 9,69 МБ</div>
<div class="a" style="left:280px;top:579px;width:1px;height:15px;background:#e5e5e5;"></div>
<div class="a" style="left:328px;top:198px;width:470px;height:693px;background:#404040;box-shadow:0 2px 14px rgba(0,0,0,.35)"></div>
<div class="a" style="left:328px;top:198px;width:470px;height:30px;background:#fff;border:1px solid #9a9a9a;border-bottom:none"></div>
<svg class="a" style="left:338px;top:203px;" width="12" height="18" viewBox="0 0 12 18"><path d="M1 1H6Q9 1.5 9.5 5L11.5 8Q11 11 8.5 12.5L8.5 17H0.5L3 10Z" fill="#333"/></svg>
<div class="t" style="left:357px;top:206.5px;font-size:11.6px;color:#999;font-weight:400;">BodySlide</div>
<div class="t" style="left:324.5px;width:80px;text-align:center;top:239.1px;font-size:12.4px;color:#dcdcdc;font-weight:400;">Outfit/Body</div>
<div class="t" style="left:324.0px;width:80px;text-align:center;top:269.7px;font-size:11.2px;color:#dcdcdc;font-weight:400;">Preset</div>
<div class="a" style="left:406px;top:233px;width:311px;height:23px;background:#e1e1e1;border:1px solid #cfcfcf"></div>
<div class="t" style="left:410px;top:239.3px;font-size:12px;color:#000;font-weight:400;">Steam Punk Outfit</div>
<svg class="a" style="left:704px;top:243px;" width="9" height="5" viewBox="0 0 9 5"><path d="M0.5 0.5L4.5 4.5L8.5 0.5" fill="none" stroke="#333" stroke-width="1"/></svg>
<div class="a" style="left:723px;top:234px;width:22px;height:22px;background:#e1e1e1;border:1px solid #d0d0d0"></div>
<svg class="a" style="left:728px;top:239px;" width="12" height="12" viewBox="0 0 12 12"><path d="M1 1L11 11M11 1L1 11" stroke="#e3101e" stroke-width="2.2"/></svg>
<div class="a" style="left:406px;top:263px;width:311px;height:23px;background:#e1e1e1;border:1px solid #cfcfcf"></div>
<div class="t" style="left:410px;top:269.3px;font-size:12px;color:#000;font-weight:400;">Voluptuous Body</div>
<svg class="a" style="left:704px;top:273px;" width="9" height="5" viewBox="0 0 9 5"><path d="M0.5 0.5L4.5 4.5L8.5 0.5" fill="none" stroke="#333" stroke-width="1"/></svg>
<div class="a" style="left:723px;top:264px;width:22px;height:22px;background:#e1e1e1;border:1px solid #d0d0d0"></div>
<svg class="a" style="left:728px;top:269px;" width="12" height="12" viewBox="0 0 12 12"><path d="M1 1L11 11M11 1L1 11" stroke="#e3101e" stroke-width="2.2"/></svg>
<div class="a" style="left:751px;top:233px;width:40px;height:24px;background:#fff;"></div>
<svg class="a" style="left:757px;top:237px;" width="20" height="14" viewBox="0 0 20 14"><circle cx="6" cy="6" r="4.5" fill="none" stroke="#555" stroke-width="1.5"/><path d="M9 9L13 13" stroke="#555" stroke-width="2"/><path d="M14.5 4.5H19L16.75 7Z" fill="#666"/></svg>
<div class="t" style="left:783px;top:238.0px;font-size:11.6px;color:#888;font-weight:400;">G</div>
<div class="a" style="left:752px;top:263px;width:39px;height:24px;background:#e1e1e1;"></div>
<div class="t" style="left:785px;top:269.5px;font-size:11.6px;color:#000;font-weight:400;">S</div>
<div class="t" style="left:444.0px;width:160px;text-align:center;top:295.2px;font-size:15.7px;color:#dcdcdc;font-weight:400;">Low Weight</div>
<div class="t" style="left:327.0px;width:100px;text-align:center;top:323.1px;font-size:11.4px;color:#dcdcdc;font-weight:400;">AnkleSize</div>
<div class="a" style="left:429px;top:325px;width:217px;height:3px;background:#e6e6e6;"></div>
<svg class="a" style="left:433px;top:337px;" width="210" height="4" viewBox="0 0 210 4"><rect x="0" y="0" width="1" height="4" fill="#d8d8d8"/><rect x="10" y="0.5" width="1" height="3" fill="#d8d8d8"/><rect x="21" y="0.5" width="1" height="3" fill="#d8d8d8"/><rect x="31" y="0.5" width="1" height="3" fill="#d8d8d8"/><rect x="42" y="0.5" width="1" height="3" fill="#d8d8d8"/><rect x="52" y="0.5" width="1" height="3" fill="#d8d8d8"/><rect x="62" y="0.5" width="1" height="3" fill="#d8d8d8"/><rect x="73" y="0.5" width="1" height="3" fill="#d8d8d8"/><rect x="83" y="0.5" width="1" height="3" fill="#d8d8d8"/><rect x="94" y="0.5" width="1" height="3" fill="#d8d8d8"/><rect x="104" y="0.5" width="1" height="3" fill="#d8d8d8"/><rect x="114" y="0.5" width="1" height="3" fill="#d8d8d8"/><rect x="125" y="0.5" width="1" height="3" fill="#d8d8d8"/><rect x="135" y="0.5" width="1" height="3" fill="#d8d8d8"/><rect x="146" y="0.5" width="1" height="3" fill="#d8d8d8"/><rect x="156" y="0.5" width="1" height="3" fill="#d8d8d8"/><rect x="166" y="0.5" width="1" height="3" fill="#d8d8d8"/><rect x="177" y="0.5" width="1" height="3" fill="#d8d8d8"/><rect x="187" y="0.5" width="1" height="3" fill="#d8d8d8"/><rect x="198" y="0.5" width="1" height="3" fill="#d8d8d8"/><rect x="208" y="0" width="1" height="4" fill="#d8d8d8"/></svg>
<svg class="a" style="left:637px;top:319px;" width="10" height="16" viewBox="0 0 10 16"><path d="M0 0H10V10.5L5 15.5L0 10.5Z" fill="#0a78d7"/></svg>
<div class="a" style="left:653px;top:321px;width:50px;height:15px;background:#fff;"></div>
<div class="t" style="left:653.0px;width:50px;text-align:center;top:323.6px;font-size:11px;color:#000;font-weight:400;">100%</div>
<div class="t" style="left:706.0px;width:100px;text-align:center;top:323.1px;font-size:11.4px;color:#dcdcdc;font-weight:400;">AnkleSize</div>
<div class="t" style="left:327.0px;width:100px;text-align:center;top:347.1px;font-size:11.4px;color:#dcdcdc;font-weight:400;">BackArch</div>
<div class="a" style="left:429px;top:349px;width:217px;height:3px;background:#e6e6e6;"></div>
<svg class="a" style="left:433px;top:361px;" width="210" height="4" viewBox="0 0 210 4"><rect x="0" y="0" width="1" height="4" fill="#d8d8d8"/><rect x="10" y="0.5" width="1" height="3" fill="#d8d8d8"/><rect x="21" y="0.5" width="1" height="3" fill="#d8d8d8"/><rect x="31" y="0.5" width="1" height="3" fill="#d8d8d8"/><rect x="42" y="0.5" width="1" height="3" fill="#d8d8d8"/><rect x="52" y="0.5" width="1" height="3" fill="#d8d8d8"/><rect x="62" y="0.5" width="1" height="3" fill="#d8d8d8"/><rect x="73" y="0.5" width="1" height="3" fill="#d8d8d8"/><rect x="83" y="0.5" width="1" height="3" fill="#d8d8d8"/><rect x="94" y="0.5" width="1" height="3" fill="#d8d8d8"/><rect x="104" y="0.5" width="1" height="3" fill="#d8d8d8"/><rect x="114" y="0.5" width="1" height="3" fill="#d8d8d8"/><rect x="125" y="0.5" width="1" height="3" fill="#d8d8d8"/><rect x="135" y="0.5" width="1" height="3" fill="#d8d8d8"/><rect x="146" y="0.5" width="1" height="3" fill="#d8d8d8"/><rect x="156" y="0.5" width="1" height="3" fill="#d8d8d8"/><rect x="166" y="0.5" width="1" height="3" fill="#d8d8d8"/><rect x="177" y="0.5" width="1" height="3" fill="#d8d8d8"/><rect x="187" y="0.5" width="1" height="3" fill="#d8d8d8"/><rect x="198" y="0.5" width="1" height="3" fill="#d8d8d8"/><rect x="208" y="0" width="1" height="4" fill="#d8d8d8"/></svg>
<svg class="a" style="left:429px;top:343px;" width="10" height="16" viewBox="0 0 10 16"><path d="M0 0H10V10.5L5 15.5L0 10.5Z" fill="#0a78d7"/></svg>
<div class="a" style="left:653px;top:345px;width:50px;height:15px;background:#fff;"></div>
<div class="t" style="left:653.0px;width:50px;text-align:center;top:347.6px;font-size:11px;color:#000;font-weight:400;">0%</div>
<div class="t" style="left:706.0px;width:100px;text-align:center;top:347.1px;font-size:11.4px;color:#dcdcdc;font-weight:400;">BackArch</div>
<div class="t" style="left:327.0px;width:100px;text-align:center;top:371.1px;font-size:11.4px;color:#dcdcdc;font-weight:400;">BreastCenter</div>
<div class="a" style="left:429px;top:373px;width:217px;height:3px;background:#e6e6e6;"></div>
<svg class="a" style="left:433px;top:385px;" width="210" height="4" viewBox="0 0 210 4"><rect x="0" y="0" width="1" height="4" fill="#d8d8d8"/><rect x="10" y="0.5" width="1" height="3" fill="#d8d8d8"/><rect x="21" y="0.5" width="1" height="3" fill="#d8d8d8"/><rect x="31" y="0.5" width="1" height="3" fill="#d8d8d8"/><rect x="42" y="0.5" width="1" height="3" fill="#d8d8d8"/><rect x="52" y="0.5" width="1" height="3" fill="#d8d8d8"/><rect x="62" y="0.5" width="1" height="3" fill="#d8d8d8"/><rect x="73" y="0.5" width="1" height="3" fill="#d8d8d8"/><rect x="83" y="0.5" width="1" height="3" fill="#d8d8d8"/><rect x="94" y="0.5" width="1" height="3" fill="#d8d8d8"/><rect x="104" y="0.5" width="1" height="3" fill="#d8d8d8"/><rect x="114" y="0.5" width="1" height="3" fill="#d8d8d8"/><rect x="125" y="0.5" width="1" height="3" fill="#d8d8d8"/><rect x="135" y="0.5" width="1" height="3" fill="#d8d8d8"/><rect x="146" y="0.5" width="1" height="3" fill="#d8d8d8"/><rect x="156" y="0.5" width="1" height="3" fill="#d8d8d8"/><rect x="166" y="0.5" width="1" height="3" fill="#d8d8d8"/><rect x="177" y="0.5" width="1" height="3" fill="#d8d8d8"/><rect x="187" y="0.5" width="1" height="3" fill="#d8d8d8"/><rect x="198" y="0.5" width="1" height="3" fill="#d8d8d8"/><rect x="208" y="0" width="1" height="4" fill="#d8d8d8"/></svg>
<svg class="a" style="left:429px;top:367px;" width="10" height="16" viewBox="0 0 10 16"><path d="M0 0H10V10.5L5 15.5L0 10.5Z" fill="#0a78d7"/></svg>
<div class="a" style="left:653px;top:369px;width:50px;height:15px;background:#fff;"></div>
<div class="t" style="left:653.0px;width:50px;text-align:center;top:371.6px;font-size:11px;color:#000;font-weight:400;">0%</div>
<div class="t" style="left:706.0px;width:100px;text-align:center;top:371.1px;font-size:11.4px;color:#dcdcdc;font-weight:400;">BreastCenter</div>
<div class="t" style="left:327.0px;width:100px;text-align:center;top:395.1px;font-size:11.4px;color:#dcdcdc;font-weight:400;">BreastCenterBig</div>
<div class="a" style="left:429px;top:397px;width:217px;height:3px;background:#e6e6e6;"></div>
<svg class="a" style="left:433px;top:409px;" width="210" height="4" viewBox="0 0 210 4"><rect x="0" y="0" width="1" height="4" fill="#d8d8d8"/><rect x="10" y="0.5" width="1" height="3" fill="#d8d8d8"/><rect x="21" y="0.5" width="1" height="3" fill="#d8d8d8"/><rect x="31" y="0.5" width="1" height="3" fill="#d8d8d8"/><rect x="42" y="0.5" width="1" height="3" fill="#d8d8d8"/><rect x="52" y="0.5" width="1" height="3" fill="#d8d8d8"/><rect x="62" y="0.5" width="1" height="3" fill="#d8d8d8"/><rect x="73" y="0.5" width="1" height="3" fill="#d8d8d8"/><rect x="83" y="0.5" width="1" height="3" fill="#d8d8d8"/><rect x="94" y="0.5" width="1" height="3" fill="#d8d8d8"/><rect x="104" y="0.5" width="1" height="3" fill="#d8d8d8"/><rect x="114" y="0.5" width="1" height="3" fill="#d8d8d8"/><rect x="125" y="0.5" width="1" height="3" fill="#d8d8d8"/><rect x="135" y="0.5" width="1" height="3" fill="#d8d8d8"/><rect x="146" y="0.5" width="1" height="3" fill="#d8d8d8"/><rect x="156" y="0.5" width="1" height="3" fill="#d8d8d8"/><rect x="166" y="0.5" width="1" height="3" fill="#d8d8d8"/><rect x="177" y="0.5" width="1" height="3" fill="#d8d8d8"/><rect x="187" y="0.5" width="1" height="3" fill="#d8d8d8"/><rect x="198" y="0.5" width="1" height="3" fill="#d8d8d8"/><rect x="208" y="0" width="1" height="4" fill="#d8d8d8"/></svg>
<svg class="a" style="left:429px;top:391px;" width="10" height="16" viewBox="0 0 10 16"><path d="M0 0H10V10.5L5 15.5L0 10.5Z" fill="#0a78d7"/></svg>
<div class="a" style="left:653px;top:393px;width:50px;height:15px;background:#fff;"></div>
<div class="t" style="left:653.0px;width:50px;text-align:center;top:395.6px;font-size:11px;color:#000;font-weight:400;">0%</div>
<div class="t" style="left:706.0px;width:100px;text-align:center;top:395.1px;font-size:11.4px;color:#dcdcdc;font-weight:400;">BreastCenterBig</div>
<div class="t" style="left:327.0px;width:100px;text-align:center;top:419.1px;font-size:11.4px;color:#dcdcdc;font-weight:400;">BreastFlatness2</div>
<div class="a" style="left:429px;top:421px;width:217px;height:3px;background:#e6e6e6;"></div>
<svg class="a" style="left:433px;top:433px;" width="210" height="4" viewBox="0 0 210 4"><rect x="0" y="0" width="1" height="4" fill="#d8d8d8"/><rect x="10" y="0.5" width="1" height="3" fill="#d8d8d8"/><rect x="21" y="0.5" width="1" height="3" fill="#d8d8d8"/><rect x="31" y="0.5" width="1" height="3" fill="#d8d8d8"/><rect x="42" y="0.5" width="1" height="3" fill="#d8d8d8"/><rect x="52" y="0.5" width="1" height="3" fill="#d8d8d8"/><rect x="62" y="0.5" width="1" height="3" fill="#d8d8d8"/><rect x="73" y="0.5" width="1" height="3" fill="#d8d8d8"/><rect x="83" y="0.5" width="1" height="3" fill="#d8d8d8"/><rect x="94" y="0.5" width="1" height="3" fill="#d8d8d8"/><rect x="104" y="0.5" width="1" height="3" fill="#d8d8d8"/><rect x="114" y="0.5" width="1" height="3" fill="#d8d8d8"/><rect x="125" y="0.5" width="1" height="3" fill="#d8d8d8"/><rect x="135" y="0.5" width="1" height="3" fill="#d8d8d8"/><rect x="146" y="0.5" width="1" height="3" fill="#d8d8d8"/><rect x="156" y="0.5" width="1" height="3" fill="#d8d8d8"/><rect x="166" y="0.5" width="1" height="3" fill="#d8d8d8"/><rect x="177" y="0.5" width="1" height="3" fill="#d8d8d8"/><rect x="187" y="0.5" width="1" height="3" fill="#d8d8d8"/><rect x="198" y="0.5" width="1" height="3" fill="#d8d8d8"/><rect x="208" y="0" width="1" height="4" fill="#d8d8d8"/></svg>
<svg class="a" style="left:429px;top:415px;" width="10" height="16" viewBox="0 0 10 16"><path d="M0 0H10V10.5L5 15.5L0 10.5Z" fill="#0a78d7"/></svg>
<div class="a" style="left:653px;top:417px;width:50px;height:15px;background:#fff;"></div>
<div class="t" style="left:653.0px;width:50px;text-align:center;top:419.6px;font-size:11px;color:#000;font-weight:400;">0%</div>
<div class="t" style="left:706.0px;width:100px;text-align:center;top:419.1px;font-size:11.4px;color:#dcdcdc;font-weight:400;">BreastFlatness2</div>
<div class="t" style="left:327.0px;width:100px;text-align:center;top:443.1px;font-size:11.4px;color:#dcdcdc;font-weight:400;">BreastGravity2</div>
<div class="a" style="left:429px;top:445px;width:217px;height:3px;background:#e6e6e6;"></div>
<svg class="a" style="left:433px;top:457px;" width="210" height="4" viewBox="0 0 210 4"><rect x="0" y="0" width="1" height="4" fill="#d8d8d8"/><rect x="10" y="0.5" width="1" height="3" fill="#d8d8d8"/><rect x="21" y="0.5" width="1" height="3" fill="#d8d8d8"/><rect x="31" y="0.5" width="1" height="3" fill="#d8d8d8"/><rect x="42" y="0.5" width="1" height="3" fill="#d8d8d8"/><rect x="52" y="0.5" width="1" height="3" fill="#d8d8d8"/><rect x="62" y="0.5" width="1" height="3" fill="#d8d8d8"/><rect x="73" y="0.5" width="1" height="3" fill="#d8d8d8"/><rect x="83" y="0.5" width="1" height="3" fill="#d8d8d8"/><rect x="94" y="0.5" width="1" height="3" fill="#d8d8d8"/><rect x="104" y="0.5" width="1" height="3" fill="#d8d8d8"/><rect x="114" y="0.5" width="1" height="3" fill="#d8d8d8"/><rect x="125" y="0.5" width="1" height="3" fill="#d8d8d8"/><rect x="135" y="0.5" width="1" height="3" fill="#d8d8d8"/><rect x="146" y="0.5" width="1" height="3" fill="#d8d8d8"/><rect x="156" y="0.5" width="1" height="3" fill="#d8d8d8"/><rect x="166" y="0.5" width="1" height="3" fill="#d8d8d8"/><rect x="177" y="0.5" width="1" height="3" fill="#d8d8d8"/><rect x="187" y="0.5" width="1" height="3" fill="#d8d8d8"/><rect x="198" y="0.5" width="1" height="3" fill="#d8d8d8"/><rect x="208" y="0" width="1" height="4" fill="#d8d8d8"/></svg>
<svg class="a" style="left:450px;top:439px;" width="10" height="16" viewBox="0 0 10 16"><path d="M0 0H10V10.5L5 15.5L0 10.5Z" fill="#0a78d7"/></svg>
<div class="a" style="left:653px;top:441px;width:50px;height:15px;background:#fff;"></div>
<div class="t" style="left:653.0px;width:50px;text-align:center;top:443.6px;font-size:11px;color:#000;font-weight:400;">10%</div>
<div class="t" style="left:706.0px;width:100px;text-align:center;top:443.1px;font-size:11.4px;color:#dcdcdc;font-weight:400;">BreastGravity2</div>
<div class="t" style="left:327.0px;width:100px;text-align:center;top:467.1px;font-size:11.4px;color:#dcdcdc;font-weight:400;">BreastsGone</div>
<div class="a" style="left:429px;top:469px;width:217px;height:3px;background:#e6e6e6;"></div>
<svg class="a" style="left:433px;top:481px;" width="210" height="4" viewBox="0 0 210 4"><rect x="0" y="0" width="1" height="4" fill="#d8d8d8"/><rect x="10" y="0.5" width="1" height="3" fill="#d8d8d8"/><rect x="21" y="0.5" width="1" height="3" fill="#d8d8d8"/><rect x="31" y="0.5" width="1" height="3" fill="#d8d8d8"/><rect x="42" y="0.5" width="1" height="3" fill="#d8d8d8"/><rect x="52" y="0.5" width="1" height="3" fill="#d8d8d8"/><rect x="62" y="0.5" width="1" height="3" fill="#d8d8d8"/><rect x="73" y="0.5" width="1" height="3" fill="#d8d8d8"/><rect x="83" y="0.5" width="1" height="3" fill="#d8d8d8"/><rect x="94" y="0.5" width="1" height="3" fill="#d8d8d8"/><rect x="104" y="0.5" width="1" height="3" fill="#d8d8d8"/><rect x="114" y="0.5" width="1" height="3" fill="#d8d8d8"/><rect x="125" y="0.5" width="1" height="3" fill="#d8d8d8"/><rect x="135" y="0.5" width="1" height="3" fill="#d8d8d8"/><rect x="146" y="0.5" width="1" height="3" fill="#d8d8d8"/><rect x="156" y="0.5" width="1" height="3" fill="#d8d8d8"/><rect x="166" y="0.5" width="1" height="3" fill="#d8d8d8"/><rect x="177" y="0.5" width="1" height="3" fill="#d8d8d8"/><rect x="187" y="0.5" width="1" height="3" fill="#d8d8d8"/><rect x="198" y="0.5" width="1" height="3" fill="#d8d8d8"/><rect x="208" y="0" width="1" height="4" fill="#d8d8d8"/></svg>
<svg class="a" style="left:429px;top:463px;" width="10" height="16" viewBox="0 0 10 16"><path d="M0 0H10V10.5L5 15.5L0 10.5Z" fill="#0a78d7"/></svg>
<div class="a" style="left:653px;top:465px;width:50px;height:15px;background:#fff;"></div>
<div class="t" style="left:653.0px;width:50px;text-align:center;top:467.6px;font-size:11px;color:#000;font-weight:400;">0%</div>
<div class="t" style="left:706.0px;width:100px;text-align:center;top:467.1px;font-size:11.4px;color:#dcdcdc;font-weight:400;">BreastsGone</div>
<div class="t" style="left:327.0px;width:100px;text-align:center;top:491.1px;font-size:11.4px;color:#dcdcdc;font-weight:400;">BreastsNewSH</div>
<div class="a" style="left:429px;top:493px;width:217px;height:3px;background:#e6e6e6;"></div>
<svg class="a" style="left:433px;top:505px;" width="210" height="4" viewBox="0 0 210 4"><rect x="0" y="0" width="1" height="4" fill="#d8d8d8"/><rect x="10" y="0.5" width="1" height="3" fill="#d8d8d8"/><rect x="21" y="0.5" width="1" height="3" fill="#d8d8d8"/><rect x="31" y="0.5" width="1" height="3" fill="#d8d8d8"/><rect x="42" y="0.5" width="1" height="3" fill="#d8d8d8"/><rect x="52" y="0.5" width="1" height="3" fill="#d8d8d8"/><rect x="62" y="0.5" width="1" height="3" fill="#d8d8d8"/><rect x="73" y="0.5" width="1" height="3" fill="#d8d8d8"/><rect x="83" y="0.5" width="1" height="3" fill="#d8d8d8"/><rect x="94" y="0.5" width="1" height="3" fill="#d8d8d8"/><rect x="104" y="0.5" width="1" height="3" fill="#d8d8d8"/><rect x="114" y="0.5" width="1" height="3" fill="#d8d8d8"/><rect x="125" y="0.5" width="1" height="3" fill="#d8d8d8"/><rect x="135" y="0.5" width="1" height="3" fill="#d8d8d8"/><rect x="146" y="0.5" width="1" height="3" fill="#d8d8d8"/><rect x="156" y="0.5" width="1" height="3" fill="#d8d8d8"/><rect x="166" y="0.5" width="1" height="3" fill="#d8d8d8"/><rect x="177" y="0.5" width="1" height="3" fill="#d8d8d8"/><rect x="187" y="0.5" width="1" height="3" fill="#d8d8d8"/><rect x="198" y="0.5" width="1" height="3" fill="#d8d8d8"/><rect x="208" y="0" width="1" height="4" fill="#d8d8d8"/></svg>
<svg class="a" style="left:429px;top:487px;" width="10" height="16" viewBox="0 0 10 16"><path d="M0 0H10V10.5L5 15.5L0 10.5Z" fill="#0a78d7"/></svg>
<div class="a" style="left:653px;top:489px;width:50px;height:15px;background:#fff;"></div>
<div class="t" style="left:653.0px;width:50px;text-align:center;top:491.6px;font-size:11px;color:#000;font-weight:400;">0%</div>
<div class="t" style="left:706.0px;width:100px;text-align:center;top:491.1px;font-size:11.4px;color:#dcdcdc;font-weight:400;">BreastsNewSH</div>
<div class="t" style="left:327.0px;width:100px;text-align:center;top:515.1px;font-size:11.4px;color:#dcdcdc;font-weight:400;">BreastsSmall2</div>
<div class="a" style="left:429px;top:517px;width:217px;height:3px;background:#e6e6e6;"></div>
<svg class="a" style="left:433px;top:529px;" width="210" height="4" viewBox="0 0 210 4"><rect x="0" y="0" width="1" height="4" fill="#d8d8d8"/><rect x="10" y="0.5" width="1" height="3" fill="#d8d8d8"/><rect x="21" y="0.5" width="1" height="3" fill="#d8d8d8"/><rect x="31" y="0.5" width="1" height="3" fill="#d8d8d8"/><rect x="42" y="0.5" width="1" height="3" fill="#d8d8d8"/><rect x="52" y="0.5" width="1" height="3" fill="#d8d8d8"/><rect x="62" y="0.5" width="1" height="3" fill="#d8d8d8"/><rect x="73" y="0.5" width="1" height="3" fill="#d8d8d8"/><rect x="83" y="0.5" width="1" height="3" fill="#d8d8d8"/><rect x="94" y="0.5" width="1" height="3" fill="#d8d8d8"/><rect x="104" y="0.5" width="1" height="3" fill="#d8d8d8"/><rect x="114" y="0.5" width="1" height="3" fill="#d8d8d8"/><rect x="125" y="0.5" width="1" height="3" fill="#d8d8d8"/><rect x="135" y="0.5" width="1" height="3" fill="#d8d8d8"/><rect x="146" y="0.5" width="1" height="3" fill="#d8d8d8"/><rect x="156" y="0.5" width="1" height="3" fill="#d8d8d8"/><rect x="166" y="0.5" width="1" height="3" fill="#d8d8d8"/><rect x="177" y="0.5" width="1" height="3" fill="#d8d8d8"/><rect x="187" y="0.5" width="1" height="3" fill="#d8d8d8"/><rect x="198" y="0.5" width="1" height="3" fill="#d8d8d8"/><rect x="208" y="0" width="1" height="4" fill="#d8d8d8"/></svg>
<svg class="a" style="left:429px;top:511px;" width="10" height="16" viewBox="0 0 10 16"><path d="M0 0H10V10.5L5 15.5L0 10.5Z" fill="#0a78d7"/></svg>
<div class="a" style="left:653px;top:513px;width:50px;height:15px;background:#fff;"></div>
<div class="t" style="left:653.0px;width:50px;text-align:center;top:515.6px;font-size:11px;color:#000;font-weight:400;">0%</div>
<div class="t" style="left:706.0px;width:100px;text-align:center;top:515.1px;font-size:11.4px;color:#dcdcdc;font-weight:400;">BreastsSmall2</div>
<div class="t" style="left:327.0px;width:100px;text-align:center;top:539.1px;font-size:11.4px;color:#dcdcdc;font-weight:400;">BreastsTogether</div>
<div class="a" style="left:429px;top:541px;width:217px;height:3px;background:#e6e6e6;"></div>
<svg class="a" style="left:433px;top:553px;" width="210" height="4" viewBox="0 0 210 4"><rect x="0" y="0" width="1" height="4" fill="#d8d8d8"/><rect x="10" y="0.5" width="1" height="3" fill="#d8d8d8"/><rect x="21" y="0.5" width="1" height="3" fill="#d8d8d8"/><rect x="31" y="0.5" width="1" height="3" fill="#d8d8d8"/><rect x="42" y="0.5" width="1" height="3" fill="#d8d8d8"/><rect x="52" y="0.5" width="1" height="3" fill="#d8d8d8"/><rect x="62" y="0.5" width="1" height="3" fill="#d8d8d8"/><rect x="73" y="0.5" width="1" height="3" fill="#d8d8d8"/><rect x="83" y="0.5" width="1" height="3" fill="#d8d8d8"/><rect x="94" y="0.5" width="1" height="3" fill="#d8d8d8"/><rect x="104" y="0.5" width="1" height="3" fill="#d8d8d8"/><rect x="114" y="0.5" width="1" height="3" fill="#d8d8d8"/><rect x="125" y="0.5" width="1" height="3" fill="#d8d8d8"/><rect x="135" y="0.5" width="1" height="3" fill="#d8d8d8"/><rect x="146" y="0.5" width="1" height="3" fill="#d8d8d8"/><rect x="156" y="0.5" width="1" height="3" fill="#d8d8d8"/><rect x="166" y="0.5" width="1" height="3" fill="#d8d8d8"/><rect x="177" y="0.5" width="1" height="3" fill="#d8d8d8"/><rect x="187" y="0.5" width="1" height="3" fill="#d8d8d8"/><rect x="198" y="0.5" width="1" height="3" fill="#d8d8d8"/><rect x="208" y="0" width="1" height="4" fill="#d8d8d8"/></svg>
<svg class="a" style="left:481px;top:535px;" width="10" height="16" viewBox="0 0 10 16"><path d="M0 0H10V10.5L5 15.5L0 10.5Z" fill="#0a78d7"/></svg>
<div class="a" style="left:653px;top:537px;width:50px;height:15px;background:#fff;"></div>
<div class="t" style="left:653.0px;width:50px;text-align:center;top:539.6px;font-size:11px;color:#000;font-weight:400;">25%</div>
<div class="t" style="left:706.0px;width:100px;text-align:center;top:539.1px;font-size:11.4px;color:#dcdcdc;font-weight:400;">BreastsTogether</div>
<div class="t" style="left:327.0px;width:100px;text-align:center;top:563.1px;font-size:11.4px;color:#dcdcdc;font-weight:400;">BreastTopSlope</div>
<div class="a" style="left:429px;top:565px;width:217px;height:3px;background:#e6e6e6;"></div>
<svg class="a" style="left:433px;top:577px;" width="210" height="4" viewBox="0 0 210 4"><rect x="0" y="0" width="1" height="4" fill="#d8d8d8"/><rect x="10" y="0.5" width="1" height="3" fill="#d8d8d8"/><rect x="21" y="0.5" width="1" height="3" fill="#d8d8d8"/><rect x="31" y="0.5" width="1" height="3" fill="#d8d8d8"/><rect x="42" y="0.5" width="1" height="3" fill="#d8d8d8"/><rect x="52" y="0.5" width="1" height="3" fill="#d8d8d8"/><rect x="62" y="0.5" width="1" height="3" fill="#d8d8d8"/><rect x="73" y="0.5" width="1" height="3" fill="#d8d8d8"/><rect x="83" y="0.5" width="1" height="3" fill="#d8d8d8"/><rect x="94" y="0.5" width="1" height="3" fill="#d8d8d8"/><rect x="104" y="0.5" width="1" height="3" fill="#d8d8d8"/><rect x="114" y="0.5" width="1" height="3" fill="#d8d8d8"/><rect x="125" y="0.5" width="1" height="3" fill="#d8d8d8"/><rect x="135" y="0.5" width="1" height="3" fill="#d8d8d8"/><rect x="146" y="0.5" width="1" height="3" fill="#d8d8d8"/><rect x="156" y="0.5" width="1" height="3" fill="#d8d8d8"/><rect x="166" y="0.5" width="1" height="3" fill="#d8d8d8"/><rect x="177" y="0.5" width="1" height="3" fill="#d8d8d8"/><rect x="187" y="0.5" width="1" height="3" fill="#d8d8d8"/><rect x="198" y="0.5" width="1" height="3" fill="#d8d8d8"/><rect x="208" y="0" width="1" height="4" fill="#d8d8d8"/></svg>
<svg class="a" style="left:471px;top:559px;" width="10" height="16" viewBox="0 0 10 16"><path d="M0 0H10V10.5L5 15.5L0 10.5Z" fill="#0a78d7"/></svg>
<div class="a" style="left:653px;top:561px;width:50px;height:15px;background:#fff;"></div>
<div class="t" style="left:653.0px;width:50px;text-align:center;top:563.6px;font-size:11px;color:#000;font-weight:400;">20%</div>
<div class="t" style="left:706.0px;width:100px;text-align:center;top:563.1px;font-size:11.4px;color:#dcdcdc;font-weight:400;">BreastTopSlope</div>
<div class="t" style="left:327.0px;width:100px;text-align:center;top:587.1px;font-size:11.4px;color:#dcdcdc;font-weight:400;">ButtClassic</div>
<div class="a" style="left:429px;top:589px;width:217px;height:3px;background:#e6e6e6;"></div>
<svg class="a" style="left:433px;top:601px;" width="210" height="4" viewBox="0 0 210 4"><rect x="0" y="0" width="1" height="4" fill="#d8d8d8"/><rect x="10" y="0.5" width="1" height="3" fill="#d8d8d8"/><rect x="21" y="0.5" width="1" height="3" fill="#d8d8d8"/><rect x="31" y="0.5" width="1" height="3" fill="#d8d8d8"/><rect x="42" y="0.5" width="1" height="3" fill="#d8d8d8"/><rect x="52" y="0.5" width="1" height="3" fill="#d8d8d8"/><rect x="62" y="0.5" width="1" height="3" fill="#d8d8d8"/><rect x="73" y="0.5" width="1" height="3" fill="#d8d8d8"/><rect x="83" y="0.5" width="1" height="3" fill="#d8d8d8"/><rect x="94" y="0.5" width="1" height="3" fill="#d8d8d8"/><rect x="104" y="0.5" width="1" height="3" fill="#d8d8d8"/><rect x="114" y="0.5" width="1" height="3" fill="#d8d8d8"/><rect x="125" y="0.5" width="1" height="3" fill="#d8d8d8"/><rect x="135" y="0.5" width="1" height="3" fill="#d8d8d8"/><rect x="146" y="0.5" width="1" height="3" fill="#d8d8d8"/><rect x="156" y="0.5" width="1" height="3" fill="#d8d8d8"/><rect x="166" y="0.5" width="1" height="3" fill="#d8d8d8"/><rect x="177" y="0.5" width="1" height="3" fill="#d8d8d8"/><rect x="187" y="0.5" width="1" height="3" fill="#d8d8d8"/><rect x="198" y="0.5" width="1" height="3" fill="#d8d8d8"/><rect x="208" y="0" width="1" height="4" fill="#d8d8d8"/></svg>
<svg class="a" style="left:429px;top:583px;" width="10" height="16" viewBox="0 0 10 16"><path d="M0 0H10V10.5L5 15.5L0 10.5Z" fill="#0a78d7"/></svg>
<div class="a" style="left:653px;top:585px;width:50px;height:15px;background:#fff;"></div>
<div class="t" style="left:653.0px;width:50px;text-align:center;top:587.6px;font-size:11px;color:#000;font-weight:400;">0%</div>
<div class="t" style="left:706.0px;width:100px;text-align:center;top:587.1px;font-size:11.4px;color:#dcdcdc;font-weight:400;">ButtClassic</div>
<div class="t" style="left:327.0px;width:100px;text-align:center;top:611.1px;font-size:11.4px;color:#dcdcdc;font-weight:400;">ChestDepth</div>
<div class="a" style="left:429px;top:613px;width:217px;height:3px;background:#e6e6e6;"></div>
<svg class="a" style="left:433px;top:625px;" width="210" height="4" viewBox="0 0 210 4"><rect x="0" y="0" width="1" height="4" fill="#d8d8d8"/><rect x="10" y="0.5" width="1" height="3" fill="#d8d8d8"/><rect x="21" y="0.5" width="1" height="3" fill="#d8d8d8"/><rect x="31" y="0.5" width="1" height="3" fill="#d8d8d8"/><rect x="42" y="0.5" width="1" height="3" fill="#d8d8d8"/><rect x="52" y="0.5" width="1" height="3" fill="#d8d8d8"/><rect x="62" y="0.5" width="1" height="3" fill="#d8d8d8"/><rect x="73" y="0.5" width="1" height="3" fill="#d8d8d8"/><rect x="83" y="0.5" width="1" height="3" fill="#d8d8d8"/><rect x="94" y="0.5" width="1" height="3" fill="#d8d8d8"/><rect x="104" y="0.5" width="1" height="3" fill="#d8d8d8"/><rect x="114" y="0.5" width="1" height="3" fill="#d8d8d8"/><rect x="125" y="0.5" width="1" height="3" fill="#d8d8d8"/><rect x="135" y="0.5" width="1" height="3" fill="#d8d8d8"/><rect x="146" y="0.5" width="1" height="3" fill="#d8d8d8"/><rect x="156" y="0.5" width="1" height="3" fill="#d8d8d8"/><rect x="166" y="0.5" width="1" height="3" fill="#d8d8d8"/><rect x="177" y="0.5" width="1" height="3" fill="#d8d8d8"/><rect x="187" y="0.5" width="1" height="3" fill="#d8d8d8"/><rect x="198" y="0.5" width="1" height="3" fill="#d8d8d8"/><rect x="208" y="0" width="1" height="4" fill="#d8d8d8"/></svg>
<svg class="a" style="left:429px;top:607px;" width="10" height="16" viewBox="0 0 10 16"><path d="M0 0H10V10.5L5 15.5L0 10.5Z" fill="#0a78d7"/></svg>
<div class="a" style="left:653px;top:609px;width:50px;height:15px;background:#fff;"></div>
<div class="t" style="left:653.0px;width:50px;text-align:center;top:611.6px;font-size:11px;color:#000;font-weight:400;">0%</div>
<div class="t" style="left:706.0px;width:100px;text-align:center;top:611.1px;font-size:11.4px;color:#dcdcdc;font-weight:400;">ChestDepth</div>
<div class="t" style="left:327.0px;width:100px;text-align:center;top:635.1px;font-size:11.4px;color:#dcdcdc;font-weight:400;">ChestWidth</div>
<div class="a" style="left:429px;top:637px;width:217px;height:3px;background:#e6e6e6;"></div>
<svg class="a" style="left:433px;top:649px;" width="210" height="4" viewBox="0 0 210 4"><rect x="0" y="0" width="1" height="4" fill="#d8d8d8"/><rect x="10" y="0.5" width="1" height="3" fill="#d8d8d8"/><rect x="21" y="0.5" width="1" height="3" fill="#d8d8d8"/><rect x="31" y="0.5" width="1" height="3" fill="#d8d8d8"/><rect x="42" y="0.5" width="1" height="3" fill="#d8d8d8"/><rect x="52" y="0.5" width="1" height="3" fill="#d8d8d8"/><rect x="62" y="0.5" width="1" height="3" fill="#d8d8d8"/><rect x="73" y="0.5" width="1" height="3" fill="#d8d8d8"/><rect x="83" y="0.5" width="1" height="3" fill="#d8d8d8"/><rect x="94" y="0.5" width="1" height="3" fill="#d8d8d8"/><rect x="104" y="0.5" width="1" height="3" fill="#d8d8d8"/><rect x="114" y="0.5" width="1" height="3" fill="#d8d8d8"/><rect x="125" y="0.5" width="1" height="3" fill="#d8d8d8"/><rect x="135" y="0.5" width="1" height="3" fill="#d8d8d8"/><rect x="146" y="0.5" width="1" height="3" fill="#d8d8d8"/><rect x="156" y="0.5" width="1" height="3" fill="#d8d8d8"/><rect x="166" y="0.5" width="1" height="3" fill="#d8d8d8"/><rect x="177" y="0.5" width="1" height="3" fill="#d8d8d8"/><rect x="187" y="0.5" width="1" height="3" fill="#d8d8d8"/><rect x="198" y="0.5" width="1" height="3" fill="#d8d8d8"/><rect x="208" y="0" width="1" height="4" fill="#d8d8d8"/></svg>
<svg class="a" style="left:429px;top:631px;" width="10" height="16" viewBox="0 0 10 16"><path d="M0 0H10V10.5L5 15.5L0 10.5Z" fill="#0a78d7"/></svg>
<div class="a" style="left:653px;top:633px;width:50px;height:15px;background:#fff;"></div>
<div class="t" style="left:653.0px;width:50px;text-align:center;top:635.6px;font-size:11px;color:#000;font-weight:400;">0%</div>
<div class="t" style="left:706.0px;width:100px;text-align:center;top:635.1px;font-size:11.4px;color:#dcdcdc;font-weight:400;">ChestWidth</div>
<div class="t" style="left:327.0px;width:100px;text-align:center;top:659.1px;font-size:11.4px;color:#dcdcdc;font-weight:400;">CrotchBack</div>
<div class="a" style="left:429px;top:661px;width:217px;height:3px;background:#e6e6e6;"></div>
<svg class="a" style="left:433px;top:673px;" width="210" height="4" viewBox="0 0 210 4"><rect x="0" y="0" width="1" height="4" fill="#d8d8d8"/><rect x="10" y="0.5" width="1" height="3" fill="#d8d8d8"/><rect x="21" y="0.5" width="1" height="3" fill="#d8d8d8"/><rect x="31" y="0.5" width="1" height="3" fill="#d8d8d8"/><rect x="42" y="0.5" width="1" height="3" fill="#d8d8d8"/><rect x="52" y="0.5" width="1" height="3" fill="#d8d8d8"/><rect x="62" y="0.5" width="1" height="3" fill="#d8d8d8"/><rect x="73" y="0.5" width="1" height="3" fill="#d8d8d8"/><rect x="83" y="0.5" width="1" height="3" fill="#d8d8d8"/><rect x="94" y="0.5" width="1" height="3" fill="#d8d8d8"/><rect x="104" y="0.5" width="1" height="3" fill="#d8d8d8"/><rect x="114" y="0.5" width="1" height="3" fill="#d8d8d8"/><rect x="125" y="0.5" width="1" height="3" fill="#d8d8d8"/><rect x="135" y="0.5" width="1" height="3" fill="#d8d8d8"/><rect x="146" y="0.5" width="1" height="3" fill="#d8d8d8"/><rect x="156" y="0.5" width="1" height="3" fill="#d8d8d8"/><rect x="166" y="0.5" width="1" height="3" fill="#d8d8d8"/><rect x="177" y="0.5" width="1" height="3" fill="#d8d8d8"/><rect x="187" y="0.5" width="1" height="3" fill="#d8d8d8"/><rect x="198" y="0.5" width="1" height="3" fill="#d8d8d8"/><rect x="208" y="0" width="1" height="4" fill="#d8d8d8"/></svg>
<svg class="a" style="left:481px;top:655px;" width="10" height="16" viewBox="0 0 10 16"><path d="M0 0H10V10.5L5 15.5L0 10.5Z" fill="#0a78d7"/></svg>
<div class="a" style="left:653px;top:657px;width:50px;height:15px;background:#fff;"></div>
<div class="t" style="left:653.0px;width:50px;text-align:center;top:659.6px;font-size:11px;color:#000;font-weight:400;">25%</div>
<div class="t" style="left:706.0px;width:100px;text-align:center;top:659.1px;font-size:11.4px;color:#dcdcdc;font-weight:400;">CrotchBack</div>
<div class="t" style="left:327.0px;width:100px;text-align:center;top:683.1px;font-size:11.4px;color:#dcdcdc;font-weight:400;">ForearmSize</div>
<div class="a" style="left:429px;top:685px;width:217px;height:3px;background:#e6e6e6;"></div>
<svg class="a" style="left:433px;top:697px;" width="210" height="4" viewBox="0 0 210 4"><rect x="0" y="0" width="1" height="4" fill="#d8d8d8"/><rect x="10" y="0.5" width="1" height="3" fill="#d8d8d8"/><rect x="21" y="0.5" width="1" height="3" fill="#d8d8d8"/><rect x="31" y="0.5" width="1" height="3" fill="#d8d8d8"/><rect x="42" y="0.5" width="1" height="3" fill="#d8d8d8"/><rect x="52" y="0.5" width="1" height="3" fill="#d8d8d8"/><rect x="62" y="0.5" width="1" height="3" fill="#d8d8d8"/><rect x="73" y="0.5" width="1" height="3" fill="#d8d8d8"/><rect x="83" y="0.5" width="1" height="3" fill="#d8d8d8"/><rect x="94" y="0.5" width="1" height="3" fill="#d8d8d8"/><rect x="104" y="0.5" width="1" height="3" fill="#d8d8d8"/><rect x="114" y="0.5" width="1" height="3" fill="#d8d8d8"/><rect x="125" y="0.5" width="1" height="3" fill="#d8d8d8"/><rect x="135" y="0.5" width="1" height="3" fill="#d8d8d8"/><rect x="146" y="0.5" width="1" height="3" fill="#d8d8d8"/><rect x="156" y="0.5" width="1" height="3" fill="#d8d8d8"/><rect x="166" y="0.5" width="1" height="3" fill="#d8d8d8"/><rect x="177" y="0.5" width="1" height="3" fill="#d8d8d8"/><rect x="187" y="0.5" width="1" height="3" fill="#d8d8d8"/><rect x="198" y="0.5" width="1" height="3" fill="#d8d8d8"/><rect x="208" y="0" width="1" height="4" fill="#d8d8d8"/></svg>
<svg class="a" style="left:429px;top:679px;" width="10" height="16" viewBox="0 0 10 16"><path d="M0 0H10V10.5L5 15.5L0 10.5Z" fill="#0a78d7"/></svg>
<div class="a" style="left:653px;top:681px;width:50px;height:15px;background:#fff;"></div>
<div class="t" style="left:653.0px;width:50px;text-align:center;top:683.6px;font-size:11px;color:#000;font-weight:400;">0%</div>
<div class="t" style="left:706.0px;width:100px;text-align:center;top:683.1px;font-size:11.4px;color:#dcdcdc;font-weight:400;">ForearmSize</div>
<div class="t" style="left:327.0px;width:100px;text-align:center;top:707.1px;font-size:11.4px;color:#dcdcdc;font-weight:400;">HipBone</div>
<div class="a" style="left:429px;top:709px;width:217px;height:3px;background:#e6e6e6;"></div>
<svg class="a" style="left:433px;top:721px;" width="210" height="4" viewBox="0 0 210 4"><rect x="0" y="0" width="1" height="4" fill="#d8d8d8"/><rect x="10" y="0.5" width="1" height="3" fill="#d8d8d8"/><rect x="21" y="0.5" width="1" height="3" fill="#d8d8d8"/><rect x="31" y="0.5" width="1" height="3" fill="#d8d8d8"/><rect x="42" y="0.5" width="1" height="3" fill="#d8d8d8"/><rect x="52" y="0.5" width="1" height="3" fill="#d8d8d8"/><rect x="62" y="0.5" width="1" height="3" fill="#d8d8d8"/><rect x="73" y="0.5" width="1" height="3" fill="#d8d8d8"/><rect x="83" y="0.5" width="1" height="3" fill="#d8d8d8"/><rect x="94" y="0.5" width="1" height="3" fill="#d8d8d8"/><rect x="104" y="0.5" width="1" height="3" fill="#d8d8d8"/><rect x="114" y="0.5" width="1" height="3" fill="#d8d8d8"/><rect x="125" y="0.5" width="1" height="3" fill="#d8d8d8"/><rect x="135" y="0.5" width="1" height="3" fill="#d8d8d8"/><rect x="146" y="0.5" width="1" height="3" fill="#d8d8d8"/><rect x="156" y="0.5" width="1" height="3" fill="#d8d8d8"/><rect x="166" y="0.5" width="1" height="3" fill="#d8d8d8"/><rect x="177" y="0.5" width="1" height="3" fill="#d8d8d8"/><rect x="187" y="0.5" width="1" height="3" fill="#d8d8d8"/><rect x="198" y="0.5" width="1" height="3" fill="#d8d8d8"/><rect x="208" y="0" width="1" height="4" fill="#d8d8d8"/></svg>
<svg class="a" style="left:429px;top:703px;" width="10" height="16" viewBox="0 0 10 16"><path d="M0 0H10V10.5L5 15.5L0 10.5Z" fill="#0a78d7"/></svg>
<div class="a" style="left:653px;top:705px;width:50px;height:15px;background:#fff;"></div>
<div class="t" style="left:653.0px;width:50px;text-align:center;top:707.6px;font-size:11px;color:#000;font-weight:400;">0%</div>
<div class="t" style="left:706.0px;width:100px;text-align:center;top:707.1px;font-size:11.4px;color:#dcdcdc;font-weight:400;">HipBone</div>
<div class="t" style="left:327.0px;width:100px;text-align:center;top:731.1px;font-size:11.4px;color:#dcdcdc;font-weight:400;">HipForward</div>
<div class="a" style="left:429px;top:733px;width:217px;height:3px;background:#e6e6e6;"></div>
<svg class="a" style="left:433px;top:745px;" width="210" height="4" viewBox="0 0 210 4"><rect x="0" y="0" width="1" height="4" fill="#d8d8d8"/><rect x="10" y="0.5" width="1" height="3" fill="#d8d8d8"/><rect x="21" y="0.5" width="1" height="3" fill="#d8d8d8"/><rect x="31" y="0.5" width="1" height="3" fill="#d8d8d8"/><rect x="42" y="0.5" width="1" height="3" fill="#d8d8d8"/><rect x="52" y="0.5" width="1" height="3" fill="#d8d8d8"/><rect x="62" y="0.5" width="1" height="3" fill="#d8d8d8"/><rect x="73" y="0.5" width="1" height="3" fill="#d8d8d8"/><rect x="83" y="0.5" width="1" height="3" fill="#d8d8d8"/><rect x="94" y="0.5" width="1" height="3" fill="#d8d8d8"/><rect x="104" y="0.5" width="1" height="3" fill="#d8d8d8"/><rect x="114" y="0.5" width="1" height="3" fill="#d8d8d8"/><rect x="125" y="0.5" width="1" height="3" fill="#d8d8d8"/><rect x="135" y="0.5" width="1" height="3" fill="#d8d8d8"/><rect x="146" y="0.5" width="1" height="3" fill="#d8d8d8"/><rect x="156" y="0.5" width="1" height="3" fill="#d8d8d8"/><rect x="166" y="0.5" width="1" height="3" fill="#d8d8d8"/><rect x="177" y="0.5" width="1" height="3" fill="#d8d8d8"/><rect x="187" y="0.5" width="1" height="3" fill="#d8d8d8"/><rect x="198" y="0.5" width="1" height="3" fill="#d8d8d8"/><rect x="208" y="0" width="1" height="4" fill="#d8d8d8"/></svg>
<svg class="a" style="left:502px;top:727px;" width="10" height="16" viewBox="0 0 10 16"><path d="M0 0H10V10.5L5 15.5L0 10.5Z" fill="#0a78d7"/></svg>
<div class="a" style="left:653px;top:729px;width:50px;height:15px;background:#fff;"></div>
<div class="t" style="left:653.0px;width:50px;text-align:center;top:731.6px;font-size:11px;color:#000;font-weight:400;">35%</div>
<div class="t" style="left:706.0px;width:100px;text-align:center;top:731.1px;font-size:11.4px;color:#dcdcdc;font-weight:400;">HipForward</div>
<div class="t" style="left:327.0px;width:100px;text-align:center;top:755.1px;font-size:11.4px;color:#dcdcdc;font-weight:400;">HipUpperWidth</div>
<div class="a" style="left:429px;top:757px;width:217px;height:3px;background:#e6e6e6;"></div>
<svg class="a" style="left:433px;top:769px;" width="210" height="4" viewBox="0 0 210 4"><rect x="0" y="0" width="1" height="4" fill="#d8d8d8"/><rect x="10" y="0.5" width="1" height="3" fill="#d8d8d8"/><rect x="21" y="0.5" width="1" height="3" fill="#d8d8d8"/><rect x="31" y="0.5" width="1" height="3" fill="#d8d8d8"/><rect x="42" y="0.5" width="1" height="3" fill="#d8d8d8"/><rect x="52" y="0.5" width="1" height="3" fill="#d8d8d8"/><rect x="62" y="0.5" width="1" height="3" fill="#d8d8d8"/><rect x="73" y="0.5" width="1" height="3" fill="#d8d8d8"/><rect x="83" y="0.5" width="1" height="3" fill="#d8d8d8"/><rect x="94" y="0.5" width="1" height="3" fill="#d8d8d8"/><rect x="104" y="0.5" width="1" height="3" fill="#d8d8d8"/><rect x="114" y="0.5" width="1" height="3" fill="#d8d8d8"/><rect x="125" y="0.5" width="1" height="3" fill="#d8d8d8"/><rect x="135" y="0.5" width="1" height="3" fill="#d8d8d8"/><rect x="146" y="0.5" width="1" height="3" fill="#d8d8d8"/><rect x="156" y="0.5" width="1" height="3" fill="#d8d8d8"/><rect x="166" y="0.5" width="1" height="3" fill="#d8d8d8"/><rect x="177" y="0.5" width="1" height="3" fill="#d8d8d8"/><rect x="187" y="0.5" width="1" height="3" fill="#d8d8d8"/><rect x="198" y="0.5" width="1" height="3" fill="#d8d8d8"/><rect x="208" y="0" width="1" height="4" fill="#d8d8d8"/></svg>
<svg class="a" style="left:481px;top:751px;" width="10" height="16" viewBox="0 0 10 16"><path d="M0 0H10V10.5L5 15.5L0 10.5Z" fill="#0a78d7"/></svg>
<div class="a" style="left:653px;top:753px;width:50px;height:15px;background:#fff;"></div>
<div class="t" style="left:653.0px;width:50px;text-align:center;top:755.6px;font-size:11px;color:#000;font-weight:400;">25%</div>
<div class="t" style="left:706.0px;width:100px;text-align:center;top:755.1px;font-size:11.4px;color:#dcdcdc;font-weight:400;">HipUpperWidth</div>
<div class="t" style="left:327.0px;width:100px;text-align:center;top:779.1px;font-size:11.4px;color:#dcdcdc;font-weight:400;">KneeShape</div>
<div class="a" style="left:429px;top:781px;width:217px;height:3px;background:#e6e6e6;"></div>
<svg class="a" style="left:433px;top:793px;" width="210" height="4" viewBox="0 0 210 4"><rect x="0" y="0" width="1" height="4" fill="#d8d8d8"/><rect x="10" y="0.5" width="1" height="3" fill="#d8d8d8"/><rect x="21" y="0.5" width="1" height="3" fill="#d8d8d8"/><rect x="31" y="0.5" width="1" height="3" fill="#d8d8d8"/><rect x="42" y="0.5" width="1" height="3" fill="#d8d8d8"/><rect x="52" y="0.5" width="1" height="3" fill="#d8d8d8"/><rect x="62" y="0.5" width="1" height="3" fill="#d8d8d8"/><rect x="73" y="0.5" width="1" height="3" fill="#d8d8d8"/><rect x="83" y="0.5" width="1" height="3" fill="#d8d8d8"/><rect x="94" y="0.5" width="1" height="3" fill="#d8d8d8"/><rect x="104" y="0.5" width="1" height="3" fill="#d8d8d8"/><rect x="114" y="0.5" width="1" height="3" fill="#d8d8d8"/><rect x="125" y="0.5" width="1" height="3" fill="#d8d8d8"/><rect x="135" y="0.5" width="1" height="3" fill="#d8d8d8"/><rect x="146" y="0.5" width="1" height="3" fill="#d8d8d8"/><rect x="156" y="0.5" width="1" height="3" fill="#d8d8d8"/><rect x="166" y="0.5" width="1" height="3" fill="#d8d8d8"/><rect x="177" y="0.5" width="1" height="3" fill="#d8d8d8"/><rect x="187" y="0.5" width="1" height="3" fill="#d8d8d8"/><rect x="198" y="0.5" width="1" height="3" fill="#d8d8d8"/><rect x="208" y="0" width="1" height="4" fill="#d8d8d8"/></svg>
<svg class="a" style="left:429px;top:775px;" width="10" height="16" viewBox="0 0 10 16"><path d="M0 0H10V10.5L5 15.5L0 10.5Z" fill="#0a78d7"/></svg>
<div class="a" style="left:653px;top:777px;width:50px;height:15px;background:#fff;"></div>
<div class="t" style="left:653.0px;width:50px;text-align:center;top:779.6px;font-size:11px;color:#000;font-weight:400;">0%</div>
<div class="t" style="left:706.0px;width:100px;text-align:center;top:779.1px;font-size:11.4px;color:#dcdcdc;font-weight:400;">KneeShape</div>
<div class="a" style="left:477px;top:800px;width:24px;height:24px;background:#e1e1e1;border:1px solid #d3d3d3"></div>
<svg class="a" style="left:484px;top:810px;" width="11" height="5" viewBox="0 0 11 5"><path d="M0 2.5H9" stroke="#000" stroke-width="1.3"/><path d="M7 0L10.5 2.5L7 5Z" fill="#000"/></svg>
<div class="a" style="left:657px;top:800px;width:126px;height:24px;background:#e1e1e1;border:1px solid #d3d3d3"></div>
<div class="t" style="left:657.0px;width:126px;text-align:center;top:806.6px;font-size:11.5px;color:#000;font-weight:400;">Preview</div>
<div class="a" style="left:657px;top:836px;width:126px;height:43px;background:#e1e1e1;border:1px solid #d3d3d3"></div>
<div class="t" style="left:657.0px;width:126px;text-align:center;top:850.3px;font-size:15.5px;color:#000;font-weight:400;">Build</div>
<div class="a" style="left:339px;top:856px;width:88px;height:24px;background:#e1e1e1;border:1px solid #d3d3d3"></div>
<div class="t" style="left:339.0px;width:88px;text-align:center;top:862.4px;font-size:11.7px;color:#000;font-weight:400;">Batch Build...</div>
<div class="a" style="left:790px;top:117px;width:885px;height:825px;background:#d3d3d3;border:1px solid #000;box-shadow:0 2px 18px rgba(0,0,0,.32)"></div>
<div class="a" style="left:790px;top:117px;width:885px;height:31px;background:#000;"></div>
<svg class="a" style="left:801px;top:124px;" width="14" height="17" viewBox="0 0 14 17"><path d="M1 1H6Q9 1.5 9.5 5L11.5 8Q11 11 8.5 12.5L8.5 16H0.5L3 10Z" fill="#3c3c3c"/><path d="M7.5 0.5Q11.5 2.5 12.5 7Q11.5 10 9 11" fill="none" stroke="#f3b23a" stroke-width="1"/></svg>
<div class="t" style="left:820px;top:127.0px;font-size:11.6px;color:#fff;font-weight:400;">Preview</div>
<div class="a" style="left:1554px;top:132px;width:11px;height:1px;background:#fff;"></div>
<div class="a" style="left:1600px;top:127px;width:11px;height:11px;border:1px solid #fff"></div>
<svg class="a" style="left:1646px;top:127px;" width="11" height="11" viewBox="0 0 11 11"><path d="M0.3 0.3L10.7 10.7M10.7 0.3L0.3 10.7" stroke="#fff" stroke-width="1.1"/></svg>
<div class="t" style="left:1196.0px;width:60px;text-align:center;top:159.5px;font-size:11.6px;color:#000;font-weight:400;">100</div>
<div class="t" style="left:793.5px;width:20px;text-align:center;top:179.5px;font-size:11.6px;color:#000;font-weight:400;">0</div>
<div class="a" style="left:820px;top:182px;width:808px;height:2px;background:#e6e9e8;"></div>
<svg class="a" style="left:1623px;top:175px;" width="11" height="19" viewBox="0 0 11 19"><path d="M0 0H11V13.5L5.5 19L0 13.5Z" fill="#0a78d7"/></svg>
<div class="t" style="left:1646px;top:179.5px;font-size:11.6px;color:#000;font-weight:400;">100</div>
<svg class="a" style="left:1080px;top:400px" width="300" height="450" viewBox="1080 400 300 450">
<defs>
<linearGradient id="sk" x1="0" y1="0" x2="1" y2="0.3">
<stop offset="0" stop-color="#cdb3ab"/><stop offset="0.25" stop-color="#d8c2bb"/><stop offset="0.6" stop-color="#ddcac4"/><stop offset="1" stop-color="#c6a9a0"/></linearGradient>
<linearGradient id="arm" x1="0" y1="0" x2="1" y2="0">
<stop offset="0" stop-color="#c7a9a0"/><stop offset="0.45" stop-color="#dcc5be"/><stop offset="1" stop-color="#c9aba2"/></linearGradient>
<radialGradient id="cup" cx="0.55" cy="0.45" r="0.6"><stop offset="0" stop-color="#5a5a5a"/><stop offset="0.7" stop-color="#404040"/><stop offset="1" stop-color="#353535"/></radialGradient>
<radialGradient id="hl" cx="0.5" cy="0.5" r="0.5"><stop offset="0" stop-color="#5c5c5c"/><stop offset="1" stop-color="#3a3a3a" stop-opacity="0"/></radialGradient>
<radialGradient id="skh" cx="0.5" cy="0.5" r="0.5"><stop offset="0" stop-color="#e6d3cc"/><stop offset="1" stop-color="#dcc6bf" stop-opacity="0"/></radialGradient>
</defs>
<path d="M1255 417 C1270 418 1281 428 1284 450 C1287 468 1290 476 1296 482 L1304 514 C1310 530 1311 545 1304 563 L1283 559 C1265 552 1240 556 1222 563 C1205 570 1190 577 1181 581 C1170 585 1165 595 1163 602 C1155 625 1148 660 1146 685 C1145 710 1146 740 1149 774 C1147 782 1135 787 1124 786 C1118 784 1114 782 1116 779 C1106 750 1099 715 1099 679 C1101 640 1106 610 1110 590 C1116 555 1125 525 1140 508 C1160 485 1180 460 1196 441 C1210 430 1225 420 1255 417 Z" fill="url(#sk)"/>
<ellipse cx="1262" cy="512" rx="30" ry="22" fill="url(#skh)"/>
<ellipse cx="1135" cy="600" rx="14" ry="60" fill="url(#skh)" opacity="0.8"/><path d="M1163 602 C1155 625 1148 660 1146 685 C1145 710 1146 740 1149 774 C1144 760 1138 730 1138 700 C1138 670 1145 630 1163 602Z" fill="#bea39b" opacity="0.6"/>
<path d="M1174 772 C1170 790 1171 810 1180 827 C1185 836 1195 838 1202 828 C1208 815 1212 800 1216 790 L1202 791 Z" fill="#c9afa7"/>
<circle cx="1228" cy="454" r="31" fill="#d3d3d3"/>
<path d="M1285 480 C1290 476 1296 474 1299 475 C1320 490 1345 515 1351 532 C1352 540 1348 552 1333 569 C1320 578 1312 582 1310 585 C1302 600 1298 612 1304 641 C1306 670 1304 695 1298 705 C1290 716 1275 720 1262 721 C1259 740 1255 760 1247 774 C1235 785 1220 791 1200 790 C1190 778 1178 755 1168 735 C1158 715 1150 700 1148 680 C1149 660 1155 640 1160 629 C1167 610 1175 595 1181 581 C1200 572 1235 556 1259 552 C1275 552 1290 560 1304 569 C1312 552 1310 530 1304 514 Z" fill="#353535"/>
<path d="M1229 562 C1250 556 1275 556 1300 568 C1308 590 1306 620 1289 637 C1270 648 1245 646 1231 641 Z" fill="url(#cup)"/>
<path d="M1300 478 C1322 492 1344 515 1350 532 C1349 548 1338 560 1320 572 C1318 545 1312 510 1300 478 Z" fill="#424242"/>
<ellipse cx="1290" cy="680" rx="14" ry="28" fill="url(#hl)"/>
<ellipse cx="1222" cy="750" rx="24" ry="30" fill="url(#hl)" opacity="0.8"/>
<ellipse cx="1215" cy="680" rx="18" ry="20" fill="url(#hl)" opacity="0.8"/>
<ellipse cx="1180" cy="650" rx="14" ry="20" fill="url(#hl)" opacity="0.6"/>
<g fill="none" stroke="#1b1b1b" stroke-linecap="round">
<path d="M1181 584 C1210 568 1245 554 1266 553 C1285 555 1296 563 1304 569" stroke-width="3.5"/>
<path d="M1225 569 C1224 595 1226 620 1228 641" stroke-width="4"/>
<path d="M1276 561 C1287 585 1298 610 1303 634" stroke-width="3.5"/>
<path d="M1150 672 C1165 690 1180 704 1219 713 C1240 713 1255 708 1262 703 C1270 695 1276 688 1278 680" stroke-width="2.5"/>
<path d="M1236 646 C1240 668 1244 688 1246 704" stroke-width="3.5"/>
<path d="M1258 648 C1261 662 1262 674 1263 684" stroke-width="3"/>
<path d="M1157 665 C1172 655 1188 646 1200 641" stroke-width="3"/>
<path d="M1190 600 C1200 620 1208 650 1210 690" stroke-width="3"/>
<path d="M1183 706 C1190 735 1195 765 1198 788" stroke-width="1.5"/>
<path d="M1300 480 C1310 500 1318 530 1314 565" stroke-width="2.5"/>
<path d="M1262 721 C1275 720 1290 712 1298 705" stroke-width="1.5"/>
</g>
<path d="M1165 596 L1180 591 M1163 603 L1178 599 M1162 610 L1174 607" stroke="#e8e8e8" stroke-width="1.1"/>
</svg>
<div class="a" style="left:0px;top:960px;width:90px;height:90px;background:#f2f2f2;"></div>
<div class="a" style="left:90px;top:960px;width:1830px;height:90px;background:#3c3c3c;"></div>
<svg class="a" style="left:32px;top:992px;" width="27" height="27" viewBox="0 0 27 27"><rect x="1" y="1" width="25" height="25" fill="none" stroke="#6f6f6f" stroke-width="1.8"/><circle cx="13.5" cy="13.5" r="8.3" fill="none" stroke="#6f6f6f" stroke-width="1.5"/><circle cx="13.5" cy="13.5" r="1.6" fill="#6f6f6f"/></svg>
<div class="t" style="left:102px;top:986.5px;font-size:17px;color:#f0f0f0;font-weight:400;">Unsainted</div>
<div class="t" style="left:102px;top:1010.3px;font-size:14.7px;color:#fff;font-weight:700;">Slipknot [drivemusic.me]</div>
<svg class="a" style="left:838px;top:973px;" width="35" height="35" viewBox="0 0 35 35"><circle cx="17.5" cy="17.5" r="17.2" fill="#262626"/><path d="M9.5 13.5Q14 13.5 17 17.5T25 21.5M9.5 21.5Q14 21.5 17 17.5T25 13.5M22.5 11L25.5 13.5L22.5 16M22.5 19L25.5 21.5L22.5 24" fill="none" stroke="#eee" stroke-width="1.2"/></svg>
<svg class="a" style="left:895px;top:982px;" width="19" height="18" viewBox="0 0 19 18"><path d="M1.5 0V17.5" stroke="#fff" stroke-width="1.6"/><path d="M16.8 1.5V16.5L6 9Z" fill="none" stroke="#fff" stroke-width="1.5"/></svg>
<svg class="a" style="left:935px;top:966px;" width="50" height="50" viewBox="0 0 50 50"><circle cx="25" cy="25" r="24.5" fill="none" stroke="#666" stroke-width="1.2"/><path d="M20.5 15V35M29.5 15V35" stroke="#fff" stroke-width="2"/></svg>
<svg class="a" style="left:1006px;top:982px;" width="19" height="18" viewBox="0 0 19 18"><path d="M17.5 0V17.5" stroke="#fff" stroke-width="1.6"/><path d="M1.7 1.5V16.5L12.5 9Z" fill="none" stroke="#fff" stroke-width="1.5"/></svg>
<svg class="a" style="left:1047px;top:974px;" width="35" height="35" viewBox="0 0 35 35"><circle cx="17.5" cy="17.5" r="17.2" fill="#262626"/><path d="M14 10.8A8 8 0 1 0 20 10.5" fill="none" stroke="#fff" stroke-width="1.3"/><path d="M14.5 8L14 11L17 11.5" fill="none" stroke="#fff" stroke-width="1.2"/></svg>
<div class="t" style="left:649px;top:1025.8px;font-size:12px;color:#fff;font-weight:400;">1:54</div>
<div class="a" style="left:680px;top:1030px;width:236px;height:2px;background:#fff;"></div>
<svg class="a" style="left:918px;top:1023px;" width="18" height="18" viewBox="0 0 18 18"><circle cx="9" cy="8.5" r="6.3" fill="none" stroke="#fff" stroke-width="2.6"/></svg>
<div class="a" style="left:938px;top:1030px;width:302px;height:2px;background:#7a7a7a;"></div>
<div class="t" style="left:1250px;top:1025.8px;font-size:12px;color:#fff;font-weight:400;">4:20</div>
<svg class="a" style="left:1697px;top:982px;" width="22" height="19" viewBox="0 0 22 19"><path d="M1 6H5L10 1.5V17.5L5 13H1Z" fill="none" stroke="#fff" stroke-width="1.4"/><path d="M13 6.5Q15 9.5 13 12.5M15.5 4Q19 9.5 15.5 15M18 2Q22.5 9.5 18 17" fill="none" stroke="#fff" stroke-width="1.2"/></svg>
<div class="a" style="left:1732px;top:990px;width:78px;height:3px;background:#fff;"></div>
<svg class="a" style="left:1812px;top:982px;" width="18" height="18" viewBox="0 0 18 18"><circle cx="9" cy="9" r="6.6" fill="none" stroke="#fff" stroke-width="2.8"/></svg>
<svg class="a" style="left:1848px;top:986px;" width="17" height="11" viewBox="0 0 17 11"><rect x="0.75" y="0.75" width="15.5" height="9.5" fill="none" stroke="#fff" stroke-width="1.3"/><rect x="6" y="4" width="8" height="4.5" fill="#fff"/></svg>
<div class="a" style="left:1889px;top:990px;width:2px;height:2px;background:#fff;"></div>
<div class="a" style="left:1896px;top:990px;width:2px;height:2px;background:#fff;"></div>
<div class="a" style="left:1902px;top:990px;width:2px;height:2px;background:#fff;"></div>
<div class="a" style="left:0;top:1050px;width:1920px;height:30px;background:linear-gradient(90deg,#161616 0px,#1a1919 440px,#2a2219 600px,#3a2b1c 720px,#382a20 800px,#2a2520 900px,#24241f 1050px,#1d2a27 1200px,#262319 1260px,#2c2219 1350px,#241d1a 1480px,#1c1b1b 1600px,#1a1a1a 1920px)"></div>
<div class="a" style="left:407px;top:1050px;width:33px;height:30px;background:rgba(255,255,255,0.09);"></div>
<svg class="a" style="left:10px;top:1057px;" width="17" height="16" viewBox="0 0 17 16"><path d="M0 2.2L6.8 1.3V7.5H0ZM7.8 1.1L16.5 0V7.5H7.8ZM0 8.5H6.8V14.8L0 13.9ZM7.8 8.5H16.5V16L7.8 14.9Z" fill="#fff"/></svg>
<svg class="a" style="left:45px;top:1057px;" width="17" height="17" viewBox="0 0 17 17"><circle cx="10.5" cy="6.5" r="5.6" fill="none" stroke="#fff" stroke-width="1.4"/><path d="M6.5 10.5L0.8 16.2" stroke="#fff" stroke-width="1.6"/></svg>
<svg class="a" style="left:81px;top:1057px;" width="18" height="16" viewBox="0 0 18 16"><rect x="1" y="3" width="10" height="9" fill="none" stroke="#fff" stroke-width="1.3"/><path d="M0 0.7H12M0 15H12M14.5 0V16" stroke="#fff" stroke-width="1.3"/><rect x="14" y="4" width="2.5" height="3" fill="#fff"/></svg>
<svg class="a" style="left:120px;top:1057px;" width="17" height="17" viewBox="0 0 17 17"><path d="M8.5 1C3.5 1 0.5 5 0.5 9C0.5 13.5 4 16.5 8.5 16.5C11.5 16.5 14 15.5 15.5 14V11C13.5 12.5 11.5 13 9.5 13C6.5 13 4.5 11.5 4.3 9.5H16.3C16.8 4.5 13.5 1 8.5 1ZM4.5 7C5 5 6.5 3.8 8.5 3.8C10.5 3.8 12 5 12.3 7Z" fill="#1c7ad8"/></svg>
<svg class="a" style="left:158px;top:1057px;" width="17" height="16" viewBox="0 0 17 16"><path d="M0.5 1H6L7.5 3H16V15H0.5Z" fill="#f8d775"/><rect x="0.5" y="4" width="15.5" height="11" fill="#fde79a"/><path d="M4 15V10H13V15H10.5V12.5H6.5V15Z" fill="#2f8ae0"/></svg>
<div class="a" style="left:152px;top:1078px;width:28px;height:2px;background:#aaa;"></div>
<svg class="a" style="left:195px;top:1057px;" width="16" height="17" viewBox="0 0 16 17"><path d="M5 4V2.5A3 3 0 0 1 11 2.5V4" fill="none" stroke="#fff" stroke-width="1.1"/><rect x="0.5" y="4" width="15" height="12.5" fill="#fff"/><rect x="4" y="7" width="3.5" height="3.5" fill="#f25022"/><rect x="8.5" y="7" width="3.5" height="3.5" fill="#7fba00"/><rect x="4" y="11.5" width="3.5" height="3.5" fill="#00a4ef"/><rect x="8.5" y="11.5" width="3.5" height="3.5" fill="#ffb900"/></svg>
<svg class="a" style="left:232px;top:1058px;" width="17" height="14" viewBox="0 0 17 14"><path d="M0.5 5L8.5 0.5L16.5 5V13.5H0.5Z" fill="#fff"/><path d="M0.5 5L8.5 9L16.5 5" fill="none" stroke="#1a1a1a" stroke-width="1"/></svg>
<svg class="a" style="left:269px;top:1057px;" width="16" height="16" viewBox="0 0 16 16"><circle cx="8" cy="8" r="7.8" fill="#db4437"/><path d="M8 8L14.8 4.1A7.8 7.8 0 0 1 8 15.8Z" fill="#ffcd40"/><path d="M8 8V15.8A7.8 7.8 0 0 1 1.2 4.1Z" fill="#0f9d58"/><circle cx="8" cy="8" r="3.6" fill="#fff"/><circle cx="8" cy="8" r="2.8" fill="#4285f4"/></svg>
<div class="a" style="left:263px;top:1078px;width:28px;height:2px;background:#aaa;"></div>
<svg class="a" style="left:306px;top:1059px;" width="17" height="12" viewBox="0 0 17 12"><rect x="0" y="0" width="16.5" height="12" fill="#e8e8e8"/><rect x="1" y="2" width="14.5" height="9" fill="#fff"/><rect x="5" y="4" width="3" height="6" fill="#1a78d8"/><path d="M9.5 5H14M9.5 7H14M9.5 9H13" stroke="#999" stroke-width="0.8"/></svg>
<div class="a" style="left:300px;top:1078px;width:28px;height:2px;background:#aaa;"></div>
<svg class="a" style="left:343px;top:1057px;" width="17" height="17" viewBox="0 0 17 17"><path d="M13.5 3A7.2 7.2 0 1 1 9.5 1.3" fill="none" stroke="#fff" stroke-width="1.8"/><circle cx="8.5" cy="8.5" r="2.6" fill="none" stroke="#fff" stroke-width="1.8"/></svg>
<div class="a" style="left:337px;top:1078px;width:28px;height:2px;background:#aaa;"></div>
<svg class="a" style="left:380px;top:1057px;" width="17" height="17" viewBox="0 0 17 17"><circle cx="8.5" cy="8.5" r="8.2" fill="#1b3a6e"/><circle cx="11" cy="6.5" r="3" fill="none" stroke="#fff" stroke-width="1.3"/><path d="M0.5 9.5L5.5 12L10 7.5" stroke="#fff" stroke-width="2.2" fill="none"/><circle cx="5" cy="12" r="2" fill="#fff"/></svg>
<div class="a" style="left:374px;top:1078px;width:28px;height:2px;background:#aaa;"></div>
<svg class="a" style="left:417px;top:1057px;" width="16" height="17" viewBox="0 0 16 17"><path d="M2 1H6.5Q9 1.5 9.5 5L11 8Q10.5 11 8.5 12.5V16.5H1L3 10Z" fill="#3a3a3a"/><path d="M8.5 0.5Q12.5 3 13 7.5Q12 10.5 10 11" fill="none" stroke="#fff" stroke-width="1.1"/></svg>
<div class="a" style="left:407px;top:1078px;width:33px;height:2px;background:#bbb;"></div>
<div class="a" style="left:440px;top:1050px;width:1px;height:30px;background:#444;"></div>
<svg class="a" style="left:1726px;top:1062px;" width="12" height="7" viewBox="0 0 12 7"><path d="M0.5 6.5L6 1L11.5 6.5" fill="none" stroke="#fff" stroke-width="1.2"/></svg>
<svg class="a" style="left:1748px;top:1059px;" width="17" height="14" viewBox="0 0 17 14"><rect x="0.5" y="0.5" width="3.5" height="3.5" fill="none" stroke="#fff" stroke-width="0.9"/><path d="M4 2H16V10.5H2V4M6 10.5V13.5H12M2 13.5H6" fill="none" stroke="#fff" stroke-width="1.1"/><path d="M2 4V14" stroke="#fff" stroke-width="1.1"/></svg>
<svg class="a" style="left:1772px;top:1058px;" width="17" height="15" viewBox="0 0 17 15"><path d="M0.7 5H3.5L7 1.5V13.5L3.5 10H0.7Z" fill="none" stroke="#fff" stroke-width="1.1"/><path d="M9.5 5Q11 7.5 9.5 10M11.7 3Q14 7.5 11.7 12M14 1Q17 7.5 14 14" fill="none" stroke="#fff" stroke-width="1.1"/></svg>
<div class="t" style="left:1790.0px;width:40px;text-align:center;top:1057.8px;font-size:12px;color:#fff;font-weight:400;">РУС</div>
<div class="t" style="left:1827.5px;width:40px;text-align:center;top:1057.8px;font-size:12px;color:#fff;font-weight:400;">22:10</div>
<svg class="a" style="left:1879px;top:1057px;" width="17" height="17" viewBox="0 0 17 17"><path d="M0.5 0.5H16.5V12.5H10L8.5 15.5L7 12.5H0.5Z" fill="#fff"/><path d="M3 3.5H14M3 6.5H14M3 9.5H10" stroke="#222" stroke-width="1.1"/></svg>
<div class="a" style="left:1915px;top:1050px;width:1px;height:30px;background:#555;"></div>
</body></html>
